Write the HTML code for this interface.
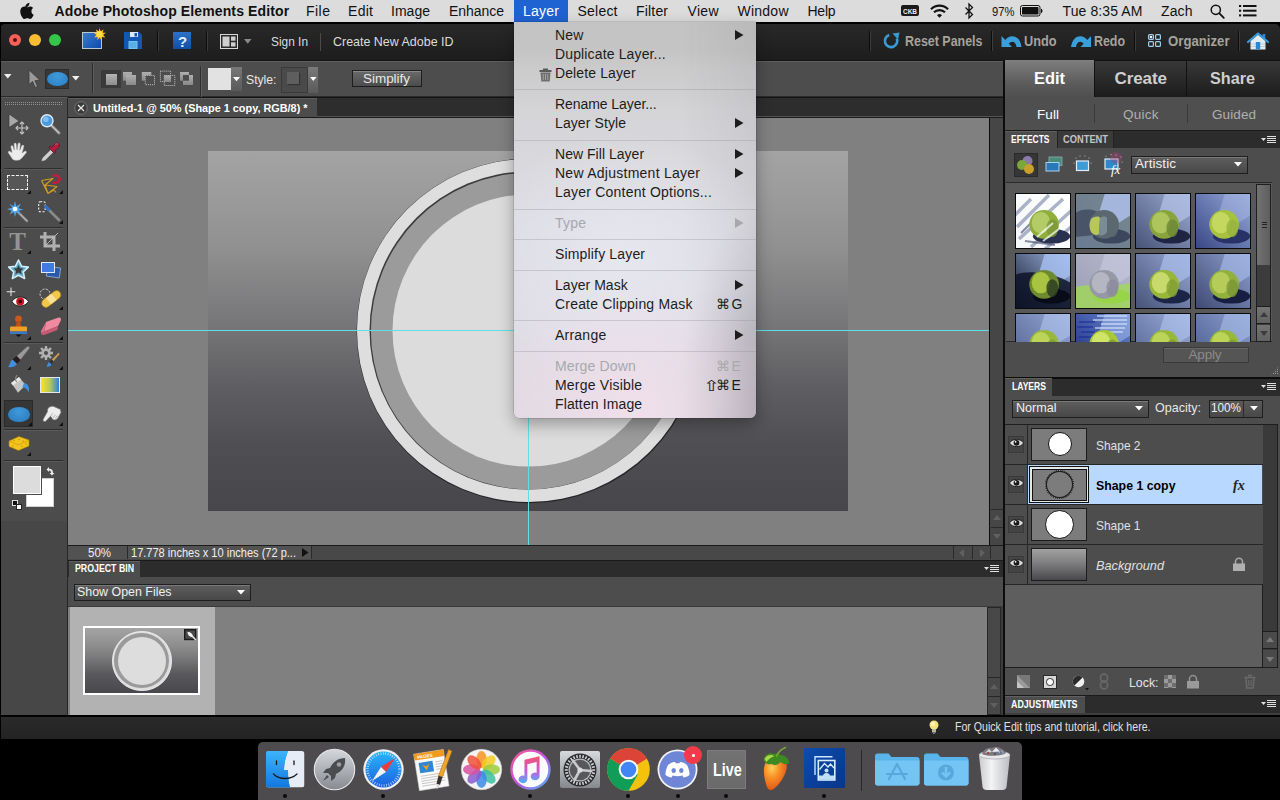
<!DOCTYPE html>
<html>
<head>
<meta charset="utf-8">
<title>Adobe Photoshop Elements Editor</title>
<style>
html,body{margin:0;padding:0;}
body{width:1280px;height:800px;overflow:hidden;background:#000;font-family:"Liberation Sans",sans-serif;position:relative;}
.abs,.abs *{position:absolute;}
.abs{left:0;top:0;width:1280px;height:800px;overflow:hidden;}
div{box-sizing:border-box;}
svg{overflow:visible;}
.t{white-space:nowrap;line-height:1;}
.b{position:absolute;}

</style>
</head>
<body>
<div class="abs">
<!-- sec_chrome -->
<div style="left:0px;top:0px;width:1280px;height:22px;background:#dcdcdc;"></div>
<svg style="left:20px;top:2px" width="15" height="18" viewBox="0 0 15 18"><path d="M10.6 4.3c.7-.9 1.1-2 1-3.1-1 .1-2.200.700-2.900 1.500-.6.7-1.200 1.900-1 3 1.100.1 2.200-.5 2.900-1.400zM13.600 9.600c0-2.100 1.700-3.100 1.800-3.200-1-1.400-2.500-1.600-3-1.600-1.300-.1-2.500.8-3.100.8-.7 0-1.600-.7-2.700-.7C5.200 4.900 3.900 5.700 3.200 7c-1.500 2.500-.4 6.300 1 8.300.7 1 1.500 2.100 2.600 2.100 1.100 0 1.500-.7 2.700-.7 1.300 0 1.600.7 2.700.7 1.100 0 1.800-1 2.500-2 .8-1.200 1.100-2.300 1.100-2.300s-2.200-.9-2.200-3.500z" fill="#111" transform="translate(-2.200,-0.400)"/></svg>
<div class="t" style="left:54.5px;top:3.8px;font-size:14px;color:#111;font-weight:700;letter-spacing:0.12px;">Adobe Photoshop Elements Editor</div>
<div class="t" style="left:306.0px;top:3.8px;font-size:14px;color:#111;letter-spacing:0.48px;">File</div>
<div class="t" style="left:348.0px;top:3.8px;font-size:14px;color:#111;letter-spacing:0.29px;">Edit</div>
<div class="t" style="left:391.0px;top:3.8px;font-size:14px;color:#111;letter-spacing:0.02px;">Image</div>
<div class="t" style="left:449.0px;top:3.8px;font-size:14px;color:#111;letter-spacing:-0.04px;">Enhance</div>
<div class="t" style="left:577.5px;top:3.8px;font-size:14px;color:#111;letter-spacing:0.22px;">Select</div>
<div class="t" style="left:636.0px;top:3.8px;font-size:14px;color:#111;letter-spacing:0.18px;">Filter</div>
<div class="t" style="left:687.5px;top:3.8px;font-size:14px;color:#111;letter-spacing:0.30px;">View</div>
<div class="t" style="left:737.5px;top:3.8px;font-size:14px;color:#111;letter-spacing:0.24px;">Window</div>
<div class="t" style="left:807.5px;top:3.8px;font-size:14px;color:#111;letter-spacing:-0.26px;">Help</div>
<div style="left:514px;top:0px;width:54px;height:22px;background:#1f62d2;"></div>
<div class="t" style="left:523.0px;top:3.8px;font-size:14px;color:#fff;letter-spacing:0.24px;">Layer</div>
<div style="left:901px;top:5px;width:18px;height:11px;background:#1a1a1a;border-radius:2px;"></div>
<div class="t" style="left:903.0px;top:7.7px;font-size:7px;color:#eee;font-weight:700;transform:scaleX(0.9231);transform-origin:0 0;">CKB</div>
<svg style="left:930px;top:4px" width="19" height="14" viewBox="0 0 19 14"><path d="M1 5.200a12 12 0 0 1 17 0" fill="none" stroke="#111" stroke-width="2.200"/><path d="M4 8.300a7.800 7.800 0 0 1 11 0" fill="none" stroke="#111" stroke-width="2.200"/><path d="M7 11.200a3.600 3.600 0 0 1 5 0L9.500 13.800z" fill="#111"/></svg>
<svg style="left:964px;top:3px" width="11" height="16" viewBox="0 0 11 16"><path d="M1.500 4.500L8.500 11.500 5 15V1l3.500 3.500L1.500 11.500" fill="none" stroke="#111" stroke-width="1.300"/></svg>
<div class="t" style="left:991.5px;top:4.5px;font-size:13px;color:#111;transform:scaleX(0.8647);transform-origin:0 0;">97%</div>
<svg style="left:1020px;top:5px" width="23" height="12" viewBox="0 0 23 12"><rect x=".5" y=".5" width="19.500" height="10.500" rx="2" fill="none" stroke="#111" stroke-width="1"/><rect x="2" y="2" width="16.500" height="7.500" rx=".8" fill="#111"/><path d="M21 3.800v4.400c.9-.3 1.500-1.200 1.500-2.200s-.6-1.900-1.500-2.200z" fill="#111"/></svg>
<div class="t" style="left:1062.5px;top:3.8px;font-size:14px;color:#111;letter-spacing:0.11px;">Tue 8:35 AM</div>
<div class="t" style="left:1161.0px;top:3.8px;font-size:14px;color:#111;letter-spacing:0.13px;">Zach</div>
<svg style="left:1210px;top:4px" width="15" height="15" viewBox="0 0 15 15"><circle cx="5.800" cy="5.800" r="4.600" fill="none" stroke="#111" stroke-width="1.500"/><path d="M9.200 9.200L13.800 13.800" stroke="#111" stroke-width="1.800" stroke-linecap="round"/></svg>
<svg style="left:1239px;top:5px" width="18" height="12" viewBox="0 0 18 12"><g fill="#111"><rect x="0" y="0" width="2.200" height="2"/><rect x="4" y="0" width="13.500" height="2"/><rect x="0" y="4.700" width="2.200" height="2"/><rect x="4" y="4.700" width="13.500" height="2"/><rect x="0" y="9.400" width="2.200" height="2"/><rect x="4" y="9.400" width="13.500" height="2"/></g></svg>
<div style="left:0px;top:22px;width:1280px;height:38px;background:#000;"></div>
<div style="left:0px;top:23.5px;width:1280px;height:36.5px;background:linear-gradient(#292929,#242424 40%,#1d1d1d);border-radius:5px 5px 0 0;"></div>
<div style="left:9px;top:34px;width:12px;height:12px;border-radius:50%;background:#f4605a;"></div>
<div style="left:13px;top:38px;width:4px;height:4px;border-radius:50%;background:#5a0f0c;"></div>
<div style="left:29px;top:34px;width:12px;height:12px;border-radius:50%;background:#f9bd33;"></div>
<div style="left:49px;top:34px;width:12px;height:12px;border-radius:50%;background:#33c748;"></div>
<div style="left:82px;top:32px;width:20px;height:17px;background:linear-gradient(135deg,#3a7bd0,#0d4ba8);border:1px solid #b9c6d6;"></div>
<svg style="left:93px;top:28px" width="13" height="13" viewBox="0 0 13 13"><path d="M6.500 0l1.200 3.300 2.900-1.900-1 3.300 3.400.1-2.800 2 2.100 2.700-3.300-.6L8.500 12.300 6.500 9.500 4.500 12.300 4.500 8.900l-3.300.6 2.100-2.700-2.800-2 3.400-.1-1-3.300 2.900 1.900z" fill="#ffc21a"/><circle cx="6.500" cy="6.300" r="3" fill="#ffdf4a"/></svg>
<svg style="left:124px;top:32px" width="18" height="17" viewBox="0 0 18 17"><path d="M0 0h15l3 3v14H0z" fill="#1556b3"/><rect x="6" y="0" width="8" height="5" fill="#dfe7f2"/><rect x="10.500" y="1" width="2.500" height="3.500" fill="#1556b3"/><rect x="4.500" y="9" width="9" height="8" fill="#6fc3f2"/><path d="M5.500 11h7M5.500 13h7M5.500 15h7" stroke="#3b8fd0" stroke-width=".8"/></svg>
<div style="left:156.5px;top:31px;width:1px;height:20px;background:#0c0c0c;"></div>
<div style="left:157.5px;top:31px;width:1px;height:20px;background:#3c3c3c;"></div>
<div style="left:205.5px;top:31px;width:1px;height:20px;background:#0c0c0c;"></div>
<div style="left:206.5px;top:31px;width:1px;height:20px;background:#3c3c3c;"></div>
<div style="left:173px;top:32px;width:18px;height:17px;background:linear-gradient(#2a72cc,#0f4fa6);"></div>
<div class="t" style="left:178.0px;top:33.8px;font-size:15px;color:#dff0ff;font-weight:700;">?</div>
<svg style="left:220px;top:34px" width="18" height="15" viewBox="0 0 18 15"><rect x=".5" y=".5" width="17" height="14" fill="#2a2a2a" stroke="#d8d8d8" stroke-width="1"/><rect x="2.500" y="2.500" width="7" height="10" fill="#cfcfcf"/><rect x="11" y="2.500" width="4.500" height="4.200" fill="#cfcfcf"/><rect x="11" y="8.300" width="4.500" height="4.200" fill="#cfcfcf"/></svg>
<svg style="left:244px;top:39px" width="8" height="5" viewBox="0 0 8 5"><path d="M0 0h7.500L3.750 4.800z" fill="#8a8a8a"/></svg>
<div class="t" style="left:271.0px;top:34.6px;font-size:13.5px;color:#dcdcdc;transform:scaleX(0.8803);transform-origin:0 0;">Sign In</div>
<div style="left:320px;top:33px;width:1px;height:18px;background:#4a4a4a;"></div>
<div class="t" style="left:332.5px;top:34.6px;font-size:13.5px;color:#dcdcdc;transform:scaleX(0.9229);transform-origin:0 0;">Create New Adobe ID</div>
<div style="left:868.5px;top:31px;width:1px;height:20px;background:#0c0c0c;"></div>
<div style="left:869.5px;top:31px;width:1px;height:20px;background:#3c3c3c;"></div>
<div style="left:991px;top:31px;width:1px;height:20px;background:#0c0c0c;"></div>
<div style="left:992px;top:31px;width:1px;height:20px;background:#3c3c3c;"></div>
<div style="left:1133.5px;top:31px;width:1px;height:20px;background:#0c0c0c;"></div>
<div style="left:1134.5px;top:31px;width:1px;height:20px;background:#3c3c3c;"></div>
<div style="left:1238px;top:31px;width:1px;height:20px;background:#0c0c0c;"></div>
<div style="left:1239px;top:31px;width:1px;height:20px;background:#3c3c3c;"></div>
<svg style="left:883px;top:32px" width="17" height="17" viewBox="0 0 17 17"><path d="M6.200 3A6.200 6.200 0 1 0 13.800 6.500" fill="none" stroke="#3a9ad4" stroke-width="2.600"/><path d="M9.500 1.500l7-1-1.500 7z" fill="#3a9ad4"/></svg>
<div class="t" style="left:905.0px;top:34.1px;font-size:14px;color:#a6a29c;font-weight:700;transform:scaleX(0.8892);transform-origin:0 0;">Reset Panels</div>
<svg style="left:1001px;top:35px" width="20" height="12" viewBox="0 0 20 12"><path d="M.5 1v11h10.500z" fill="#3aa0dc"/><path d="M4 5.500C7 -.5 18.500 -2 20.500 12h-5C15 7 11 5 7.500 9z" fill="#3aa0dc"/></svg>
<div class="t" style="left:1024.0px;top:34.1px;font-size:14px;color:#a6a29c;font-weight:700;transform:scaleX(0.9087);transform-origin:0 0;">Undo</div>
<svg style="left:1071px;top:35px" width="20" height="12" viewBox="0 0 20 12"><g transform="translate(20.500,0) scale(-1,1)"><path d="M.5 1v11h10.500z" fill="#3aa0dc"/><path d="M4 5.500C7 -.5 18.500 -2 20.500 12h-5C15 7 11 5 7.500 9z" fill="#3aa0dc"/></g></svg>
<div class="t" style="left:1094.0px;top:34.1px;font-size:14px;color:#a6a29c;font-weight:700;transform:scaleX(0.8857);transform-origin:0 0;">Redo</div>
<svg style="left:1148px;top:34px" width="13" height="13" viewBox="0 0 13 13"><g fill="none" stroke="#9ad0f0" stroke-width="1.200"><rect x=".6" y=".6" width="4.800" height="4.800" rx="1"/><rect x="7.600" y=".6" width="4.800" height="4.800" rx="1"/><rect x=".6" y="7.600" width="4.800" height="4.800" rx="1"/><rect x="7.600" y="7.600" width="4.800" height="4.800" rx="1"/></g><circle cx="3" cy="3" r="1.300" fill="#fff"/></svg>
<div class="t" style="left:1167.5px;top:34.1px;font-size:14px;color:#a6a29c;font-weight:700;transform:scaleX(0.9411);transform-origin:0 0;">Organizer</div>
<svg style="left:1247px;top:32px" width="22" height="18" viewBox="0 0 22 18"><rect x="15.500" y="2" width="2.800" height="5" fill="#2b88d0"/><path d="M3.500 9L11 2.800l7.500 6.200V17.500h-15z" fill="#e4ecf2"/><path d="M4 12h14M4 14.500h14" stroke="#b8c4cc" stroke-width=".8"/><path d="M1 10L11 1.500 21 10" fill="none" stroke="#3a9ad8" stroke-width="2.200" stroke-linejoin="round" stroke-linecap="round"/><rect x="8.800" y="10" width="4.400" height="7.500" fill="#2b88d0"/></svg>
<div style="left:1004px;top:60px;width:276px;height:37px;background:linear-gradient(#383838,#1c1c1c);border-top:1px solid #111;"></div>
<div style="left:1004px;top:60px;width:90px;height:37.5px;background:linear-gradient(#7e7e7e,#5c5c5c 60%,#4e4e4e);"></div>
<div style="left:1094px;top:61px;width:1px;height:36px;background:#111;"></div>
<div style="left:1186px;top:61px;width:1px;height:36px;background:#111;"></div>
<div class="t" style="left:1033.5px;top:70.1px;font-size:17px;color:#fff;font-weight:700;transform:scaleX(0.9655);transform-origin:0 0;">Edit</div>
<div class="t" style="left:1114.5px;top:70.1px;font-size:17px;color:#cfcfcf;font-weight:700;letter-spacing:-0.08px;">Create</div>
<div class="t" style="left:1210.0px;top:70.1px;font-size:17px;color:#cfcfcf;font-weight:700;transform:scaleX(0.9524);transform-origin:0 0;">Share</div>
<div style="left:1004px;top:97px;width:276px;height:33.5px;background:#4f4f4f;"></div>
<div style="left:1094px;top:104px;width:1px;height:19px;background:#3a3a3a;"></div>
<div style="left:1187px;top:104px;width:1px;height:19px;background:#3a3a3a;"></div>
<div class="t" style="left:1037.0px;top:107.6px;font-size:13.5px;color:#fff;letter-spacing:0.08px;">Full</div>
<div class="t" style="left:1123.0px;top:107.6px;font-size:13.5px;color:#b0b0b0;letter-spacing:0.25px;">Quick</div>
<div class="t" style="left:1212.0px;top:107.6px;font-size:13.5px;color:#b0b0b0;letter-spacing:0.09px;">Guided</div>
<div style="left:0px;top:714.5px;width:1280px;height:25.5px;background:#000;"></div>
<div style="left:0px;top:717px;width:1280px;height:22px;background:linear-gradient(#2a2a2a,#232323);"></div>
<svg style="left:929px;top:720px" width="10" height="15" viewBox="0 0 10 15"><circle cx="5" cy="5" r="4.500" fill="#f6e27a"/><circle cx="4" cy="4" r="2" fill="#fff6c0"/><rect x="3" y="9" width="4" height="3.500" fill="#b8b8a0"/><rect x="4" y="12.500" width="2" height="1.500" fill="#777"/></svg>
<div class="t" style="left:955.0px;top:721.3px;font-size:12px;color:#e0e0e0;transform:scaleX(0.8829);transform-origin:0 0;">For Quick Edit tips and tutorial, click here.</div>
<!-- sec_opt -->
<div style="left:0px;top:60px;width:1004px;height:37px;background:#4d4d4d;border-top:1px solid #141414;border-bottom:1px solid #2a2a2a;"></div>
<div style="left:0px;top:61px;width:1004px;height:1px;background:#5e5e5e;"></div>
<svg style="left:4px;top:74px" width="8" height="5" viewBox="0 0 8 5"><path d="M0 0h7.500L3.750 4.500z" fill="#f0f0f0"/></svg>
<svg style="left:28px;top:70px" width="13" height="19" viewBox="0 0 13 19"><path d="M1 0v14.500l3.600-3 2.600 6 2.400-1-2.600-5.800L11.800 10z" fill="#9a9a9a" stroke="#3a3a3a" stroke-width=".8"/></svg>
<div style="left:45px;top:69px;width:24px;height:20px;background:#383838;border:1px solid #2c2c2c;"></div>
<div style="left:47px;top:72px;width:20.5px;height:14px;background:radial-gradient(ellipse at 50% 30%,#3f9ada,#2a7fc4);border-radius:50%;"></div>
<svg style="left:72px;top:76px" width="8" height="5" viewBox="0 0 8 5"><path d="M0 0h7.500L3.750 4.500z" fill="#f0f0f0"/></svg>
<div style="left:92px;top:63px;width:1px;height:30px;background:#2e2e2e;"></div>
<div style="left:93px;top:63px;width:1px;height:30px;background:#5c5c5c;"></div>
<div style="left:101px;top:70px;width:20px;height:18px;background:#3a3a3a;"></div>
<div style="left:106px;top:74px;width:10.5px;height:10.5px;background:linear-gradient(#b4b4b4,#8c8c8c);"></div>
<svg style="left:122px;top:69px" width="74" height="18" viewBox="0 0 74 18"><defs><linearGradient id="og" x1="0" y1="0" x2="0" y2="1"><stop offset="0" stop-color="#b0b0b0"/><stop offset="1" stop-color="#888"/></linearGradient></defs><rect x="1" y="3" width="9" height="8.700" fill="url(#og)"/><rect x="4" y="6" width="10" height="10" fill="url(#og)"/><path d="M19.800 3h9.500v3.200h-6.300v5.500h-3.200z" fill="url(#og)"/><rect x="23.300" y="6.500" width="9.200" height="9.200" fill="none" stroke="#c4c4c4" stroke-width="1" stroke-dasharray="1 1"/><rect x="38.400" y="2.100" width="10.200" height="10.400" fill="none" stroke="#c4c4c4" stroke-width="1" stroke-dasharray="1 1"/><rect x="42.200" y="6.500" width="10.600" height="10" fill="none" stroke="#c4c4c4" stroke-width="1" stroke-dasharray="1 1"/><rect x="42.200" y="6.300" width="6.800" height="6.500" fill="url(#og)"/><path d="M58 3h9v3h-6v5.700h-3z" fill="url(#og)"/><path d="M67 6h4v10h-10v-4.300h6z" fill="url(#og)"/></svg>
<div style="left:200px;top:66px;width:1px;height:31px;background:#2e2e2e;"></div>
<div style="left:201px;top:66px;width:1px;height:31px;background:#5c5c5c;"></div>
<div style="left:208px;top:68px;width:23px;height:22px;background:#e2e2e2;"></div>
<div style="left:231px;top:67px;width:11px;height:24px;background:linear-gradient(#787878,#5a5a5a);"></div>
<svg style="left:233px;top:77px" width="8" height="5" viewBox="0 0 8 5"><path d="M0 0h7L3.500 4.200z" fill="#fff"/></svg>
<div class="t" style="left:245.5px;top:72.6px;font-size:13.5px;color:#e6e6e6;transform:scaleX(0.9033);transform-origin:0 0;">Style:</div>
<div style="left:281px;top:66.5px;width:27px;height:26px;background:#4a4a4a;border:1px solid #3a3a3a;"></div>
<div style="left:287px;top:72px;width:12px;height:12px;background:#5e5e5e;box-shadow:1px 1px 1px #333;"></div>
<div style="left:307.5px;top:66.5px;width:10px;height:26px;background:linear-gradient(#7a7a7a,#5a5a5a);"></div>
<svg style="left:309.5px;top:77px" width="7" height="5" viewBox="0 0 7 5"><path d="M0 0h6.500L3.250 4z" fill="#fff"/></svg>
<div style="left:352px;top:70px;width:70px;height:17px;background:linear-gradient(#6a6a6a,#4c4c4c);border:1px solid #1e1e1e;box-shadow:inset 0 1px 0 #888;"></div>
<div class="t" style="left:363.0px;top:71.6px;font-size:13.5px;color:#e8e8e8;letter-spacing:-0.04px;">Simplify</div>
<!-- sec_tools -->
<div style="left:0px;top:97px;width:68px;height:618px;background:#4c4c4c;border-right:1px solid #262626;border-top:1px solid #5a5a5a;"></div>
<div style="left:0px;top:24px;width:1px;height:716px;background:#000;"></div>
<div style="left:1px;top:521px;width:66px;height:194px;background:#474747;"></div>
<div style="left:5px;top:102px;width:57px;height:1px;background-image:linear-gradient(90deg,#909090 1px,transparent 1px);background-size:2px 1px;"></div>
<div style="left:5px;top:104px;width:57px;height:1px;background-image:linear-gradient(90deg,#909090 1px,transparent 1px);background-size:2px 1px;"></div>
<div style="left:4px;top:168px;width:59px;height:1px;background:#2e2e2e;"></div>
<div style="left:4px;top:169px;width:59px;height:1px;background:#5a5a5a;"></div>
<div style="left:4px;top:227px;width:59px;height:1px;background:#2e2e2e;"></div>
<div style="left:4px;top:228px;width:59px;height:1px;background:#5a5a5a;"></div>
<div style="left:4px;top:342px;width:59px;height:1px;background:#2e2e2e;"></div>
<div style="left:4px;top:343px;width:59px;height:1px;background:#5a5a5a;"></div>
<div style="left:4px;top:429px;width:59px;height:1px;background:#2e2e2e;"></div>
<div style="left:4px;top:430px;width:59px;height:1px;background:#5a5a5a;"></div>
<div style="left:4px;top:460px;width:59px;height:1px;background:#2e2e2e;"></div>
<div style="left:4px;top:461px;width:59px;height:1px;background:#5a5a5a;"></div>
<svg style="left:8px;top:114px" width="22" height="21" viewBox="0 0 22 21"><path d="M1 0v13.500l10-6.500z" fill="#a8a8a8" stroke="#333" stroke-width=".6"/><g stroke="#c8c8c8" stroke-width="1.100" fill="none"><path d="M14 8v12M8 14h12"/><path d="M12 10l2-2 2 2M12 18l2 2 2-2M10 12l-2 2 2 2M18 12l2 2-2 2"/></g></svg>
<svg style="left:40px;top:114px" width="21" height="21" viewBox="0 0 21 21"><path d="M11.500 11.500l7.500 7.500" stroke="#7a7a7a" stroke-width="3.200" stroke-linecap="round"/><path d="M11.500 11.500l7.500 7.500" stroke="#d0d0d0" stroke-width="1.200" stroke-linecap="round"/><circle cx="7" cy="6.800" r="6" fill="#4a9ae0" stroke="#e0eaf2" stroke-width="1.400"/><circle cx="5.800" cy="5.200" r="2.800" fill="#8cc4f4" opacity=".85"/></svg>
<svg style="left:7px;top:142px" width="21" height="19" viewBox="0 0 21 19"><path d="M5 10.500L3.800 5c-.4-1.700 1.800-2.200 2.300-.6L7.300 8 7 2.300C6.900.6 9.200.5 9.400 2.200L10 7.800l.9-5.900c.3-1.700 2.500-1.400 2.400.3L12.800 8.200l1.900-4.400c.7-1.500 2.700-.7 2.200.9L15.200 11l2.300-1.800c1.400-1 2.800.6 1.700 1.800L15 16c-1.500 1.700-3 2.500-5.500 2.500-3 0-4.500-1.300-5.300-3.300L1.200 10.800C.5 9.200 2.500 8.200 3.500 9.600z" fill="#ececec" stroke="#8a8a8a" stroke-width=".5"/></svg>
<svg style="left:40px;top:141px" width="21" height="22" viewBox="0 0 21 22"><path d="M1 20.500l1.200-3.500 8.500-8.500 2.800 2.800-8.500 8.500z" fill="#d0d0d0" stroke="#4a4a4a" stroke-width=".7"/><path d="M8.500 6.500l6 6 1.500-1.500-1-1.200 3.800-3.600c2.200-2.200-1.400-5.800-3.600-3.600L11.600 6.400 10.400 5.200z" fill="#b01e3e" stroke="#5a0d1e" stroke-width=".6"/><path d="M15 3.500c1-1 2.500-.8 3 0" fill="none" stroke="#e06a84" stroke-width=".9"/></svg>
<div style="left:7px;top:175px;width:21px;height:15px;border:1.500px dashed #f2f2f2;background:#565656;"></div>
<svg style="left:27px;top:190px" width="4" height="4" viewBox="0 0 4 4"><path d="M4 0v4H0z" fill="#111"/></svg>
<svg style="left:40px;top:173px" width="21" height="21" viewBox="0 0 21 21"><path d="M1.500 7.500L13 5.500 5 12l3 8.500 6-3.500 2 2.500M5 12l12 1.500-9 7M1.500 7.500L8 20.500" fill="none" stroke="#d09a1e" stroke-width="1.200" stroke-linejoin="round"/><path d="M12.500 2.500h3.500a3.600 3.600 0 0 1 0 7.200h-3.500" fill="none" stroke="#c01e40" stroke-width="2.600"/></svg>
<svg style="left:59px;top:190px" width="4" height="4" viewBox="0 0 4 4"><path d="M4 0v4H0z" fill="#111"/></svg>
<svg style="left:7px;top:201px" width="22" height="21" viewBox="0 0 22 21"><path d="M8 8l12 12" stroke="#8a8a8a" stroke-width="2.600" stroke-linecap="round"/><path d="M8 8l12 12" stroke="#d0d0d0" stroke-width=".8"/><path d="M8 0l1.300 5.200 4.700-2.700-2.700 4.700 5.200 1.300-5.200 1.300 2.200 3.700-4.200-2.200L8 16 6.700 11.300 2.500 13.500l2.200-3.700L0 8l5.200-1.300L2.500 2.500l4.200 2.700z" fill="#4da6f0"/><circle cx="8" cy="8" r="2.300" fill="#fff"/></svg>
<svg style="left:38px;top:201px" width="23" height="21" viewBox="0 0 23 21"><rect x=".7" y=".7" width="6.500" height="10" rx="1.500" fill="none" stroke="#f0f0f0" stroke-width="1.100" stroke-dasharray="2 1.500"/><path d="M8 6l13 13" stroke="#8a8a8a" stroke-width="2.800" stroke-linecap="round"/><path d="M7.500 5.500l3 3" stroke="#2f6fd0" stroke-width="3" stroke-linecap="round"/></svg>
<svg style="left:59px;top:220px" width="4" height="4" viewBox="0 0 4 4"><path d="M4 0v4H0z" fill="#111"/></svg>
<div class="t" style="left:9.3px;top:228.5px;font-size:25px;color:#939393;font-weight:700;font-family:&quot;Liberation Serif&quot;,serif;">T</div>
<svg style="left:27px;top:250px" width="4" height="4" viewBox="0 0 4 4"><path d="M4 0v4H0z" fill="#111"/></svg>
<svg style="left:40px;top:232px" width="21" height="20" viewBox="0 0 21 20"><g fill="none" stroke="#b0b0b0" stroke-width="3"><path d="M5 0v14h15"/><path d="M0 5h14v14"/></g><path d="M5.500 13.500L18 1" stroke="#c8c8c8" stroke-width=".8"/></svg>
<svg style="left:59px;top:250px" width="4" height="4" viewBox="0 0 4 4"><path d="M4 0v4H0z" fill="#111"/></svg>
<svg style="left:8px;top:259px" width="22" height="21" viewBox="0 0 22 21"><path d="M10.500 1l3 6.200 6.800.9-5 4.700 1.300 6.700-6.100-3.300-6.100 3.300 1.300-6.700-5-4.700 6.800-.9z" fill="#5fa8c8" stroke="#d0ecf8" stroke-width="1.600" stroke-linejoin="round"/><path d="M10.500 6l1.500 3.200 3.400.4-2.500 2.300.7 3.400-3.100-1.700-3.100 1.700.7-3.400-2.500-2.300 3.400-.4z" fill="#3a3a3a"/></svg>
<svg style="left:41px;top:262px" width="20" height="17" viewBox="0 0 20 17"><rect x="6" y="5" width="13" height="10" fill="#2c58a8" stroke="#8fb0e0" stroke-width=".8" transform="rotate(8 12 10)"/><rect x=".5" y=".5" width="13" height="10" fill="#3f7be0" stroke="#dfe8f8" stroke-width="1"/></svg>
<svg style="left:6px;top:286px" width="23" height="22" viewBox="0 0 23 22"><path d="M5 1.500v8.500M.75 5.750h8.500" stroke="#e8e8e8" stroke-width="1"/><path d="M6 15.500c3-6 13-6 16.500 0-3.500 6-13.500 6-16.500 0z" fill="#fff" stroke="#1a1a1a" stroke-width="1"/><circle cx="14.200" cy="15.500" r="4" fill="#c8141e"/><circle cx="14.200" cy="15.500" r="1.800" fill="#3a0508"/></svg>
<svg style="left:39px;top:287px" width="23" height="21" viewBox="0 0 23 21"><circle cx="6" cy="7" r="5" fill="none" stroke="#e8e8e8" stroke-width=".9" stroke-dasharray="2 1.400"/><g transform="rotate(-38 12.500 11.500)"><rect x="1" y="7.500" width="22" height="8.500" rx="4.200" fill="#f2c84a" stroke="#a07a18" stroke-width=".6"/><rect x="8.500" y="7.800" width="7" height="7.900" fill="#f8e29a"/></g></svg>
<svg style="left:59px;top:306px" width="4" height="4" viewBox="0 0 4 4"><path d="M4 0v4H0z" fill="#111"/></svg>
<svg style="left:9px;top:315px" width="19" height="22" viewBox="0 0 19 22"><circle cx="9.500" cy="4" r="3.400" fill="#c8581e"/><path d="M8 6h3l1.500 6h-6z" fill="#b8501a"/><rect x="1" y="11.500" width="17" height="5" rx="1" fill="#f0a024"/><rect x="1" y="16.500" width="17" height="2.500" fill="#3a78c8"/><path d="M6.500 19.500h6l-3 2.500z" fill="#111"/></svg>
<svg style="left:27px;top:336px" width="4" height="4" viewBox="0 0 4 4"><path d="M4 0v4H0z" fill="#111"/></svg>
<svg style="left:40px;top:317px" width="22" height="19" viewBox="0 0 22 19"><path d="M6 5L18.500 0.500c1.500-.5 3 1 2.500 2.500L18 9 4.500 14.500z" fill="#f08aa0"/><path d="M4.500 14.500L18 9l-.5 4L4 18c-2 .5-3.500-1-3-3z" fill="#c85a74"/><path d="M6 5l-5 9c-.5 1 .5 1.500 3.500.5z" fill="#e0708c"/></svg>
<svg style="left:59px;top:336px" width="4" height="4" viewBox="0 0 4 4"><path d="M4 0v4H0z" fill="#111"/></svg>
<svg style="left:8px;top:346px" width="22" height="22" viewBox="0 0 22 22"><path d="M21.500 2.500L12.500 14 8.500 10 19 .5c1.500-1 3.500.5 2.500 2z" fill="#9a9a9a" stroke="#4a4a4a" stroke-width=".6"/><path d="M8.500 10l4 4-3.500 4-4.500-4.500z" fill="#2a1c1c"/><path d="M4.500 13.500l4.500 4.500c-2 3-5.500 3.500-9 3 2-1.500 1.500-5 4.500-7.500z" fill="#3f8fe0"/></svg>
<svg style="left:27px;top:366px" width="4" height="4" viewBox="0 0 4 4"><path d="M4 0v4H0z" fill="#111"/></svg>
<svg style="left:38px;top:345px" width="24" height="23" viewBox="0 0 24 23"><g fill="#b0b0b0"><circle cx="8" cy="8" r="4.800"/><g stroke="#b0b0b0" stroke-width="2.400"><path d="M8 1v14M1 8h14M3 3l10 10M13 3L3 13"/></g></g><circle cx="8" cy="8" r="2" fill="#4c4c4c"/><path d="M22 9l-6.500 7.500-2-2L20.500 7.500z" fill="#c89a5a" stroke="#444" stroke-width=".5"/><path d="M13.500 14.500l2 2-2 3-2.500-2.500z" fill="#333"/><path d="M11 17l2.500 2.500c-1 2-3 2.500-5 2 1-1 1-3 2.500-4.500z" fill="#3f8fe0"/></svg>
<svg style="left:59px;top:366px" width="4" height="4" viewBox="0 0 4 4"><path d="M4 0v4H0z" fill="#111"/></svg>
<svg style="left:8px;top:375px" width="22" height="20" viewBox="0 0 22 20"><path d="M3 8l8-6 7 8-8 8z" fill="#c4c4c4" stroke="#555" stroke-width=".6"/><path d="M3 8l8-6 2 2.500-8 6z" fill="#e8e8e8"/><path d="M9 0c-2 3-2 6 0 7" fill="none" stroke="#888" stroke-width="1.200"/><path d="M16 8c4 .5 6 4 4.500 9.500-1-3-3-5-6-5.500z" fill="#3f8fe0"/></svg>
<div style="left:40px;top:377px;width:20px;height:16px;background:linear-gradient(90deg,#f8e61e,#b4c85a 50%,#2f7fe0);border:1px solid #e8e8e8;"></div>
<div style="left:4px;top:400px;width:29px;height:27px;background:#363636;border:1px solid #2a2a2a;"></div>
<div style="left:8px;top:407px;width:21.5px;height:14.5px;border-radius:50%;background:radial-gradient(ellipse at 50% 30%,#3f9ada,#2878bc);"></div>
<svg style="left:28px;top:422px" width="4" height="4" viewBox="0 0 4 4"><path d="M4 0v4H0z" fill="#111"/></svg>
<svg style="left:41px;top:405px" width="21" height="20" viewBox="0 0 21 20"><path d="M19.500 4.500L13 1.500C9 .5 6 3 6.500 6.500L2.300 14c-1 2 1.200 3.500 2.700 2l4.500-4.800 1.500 2.200c1.800 2.400 5 1.600 6-.4L20 7.500z" fill="#ececec" stroke="#6e6e6e" stroke-width=".7" stroke-linejoin="round"/><path d="M9.500 11.200l2.500-3M12 13l2.500-3.200M14.500 13.500l2-2.800" stroke="#9a9a9a" stroke-width=".7" fill="none"/></svg>
<svg style="left:59px;top:422px" width="4" height="4" viewBox="0 0 4 4"><path d="M4 0v4H0z" fill="#111"/></svg>
<svg style="left:8px;top:436px" width="22" height="15" viewBox="0 0 22 15"><path d="M1 5l10-4.500 10 3.500v6L10.500 14.500 1 10.500z" fill="#f2c41e" stroke="#a8820a" stroke-width=".6"/><path d="M1 5l9.500 4L21 4" fill="none" stroke="#c89a0a" stroke-width=".7"/><g fill="#c89a0a"><circle cx="6" cy="4.500" r=".8"/><circle cx="11" cy="3.500" r=".8"/><circle cx="15" cy="5" r=".8"/><circle cx="5" cy="10" r=".8"/><circle cx="14" cy="10.500" r=".8"/><circle cx="18" cy="8" r=".8"/></g></svg>
<svg style="left:27px;top:452px" width="4" height="4" viewBox="0 0 4 4"><path d="M4 0v4H0z" fill="#111"/></svg>
<div style="left:25.5px;top:478px;width:28px;height:28.5px;background:#fff;border:1px solid #d0d0d0;"></div>
<div style="left:13px;top:466px;width:28px;height:28px;background:#dcdcdc;border:1px solid #fff;box-shadow:0 0 0 1px #4c4c4c;"></div>
<svg style="left:45px;top:466px" width="10" height="10" viewBox="0 0 10 10"><path d="M1.500 3.500L4 1v1.800c3 0 4 1.500 4 4.200h1.500L7 9.500 4.500 7H6c0-1.500-.5-2.400-2-2.400V6z" fill="#e8e8e8"/></svg>
<div style="left:12px;top:500px;width:6px;height:6px;background:#111;border:1px solid #ddd;"></div>
<div style="left:15.5px;top:503.5px;width:6px;height:6px;background:#fff;border:1px solid #222;"></div>
<!-- sec_doc -->
<div style="left:68px;top:97px;width:936px;height:21px;background:#2d2d2d;border-top:1px solid #141414;"></div>
<div style="left:68px;top:116px;width:936px;height:1px;background:#545454;"></div>
<div style="left:68px;top:117px;width:936px;height:1px;background:#1a1a1a;"></div>
<div style="left:68px;top:98px;width:248.5px;height:19px;background:#4c4c4c;border-top:1px solid #5c5c5c;"></div>
<svg style="left:73.5px;top:100.5px" width="14" height="14" viewBox="0 0 14 14"><circle cx="7" cy="7" r="6.300" fill="#3c3c3c" stroke="#767676" stroke-width=".9"/><path d="M4 4l6 6M10 4l-6 6" stroke="#e8e8e8" stroke-width="1.200"/></svg>
<div class="t" style="left:92.5px;top:102.6px;font-size:11.5px;color:#fff;font-weight:700;transform:scaleX(0.9450);transform-origin:0 0;">Untitled-1 @ 50% (Shape 1 copy, RGB/8) *</div>
<div style="left:68px;top:118px;width:921px;height:427px;background:#808080;"></div>
<div style="left:208px;top:151px;width:640px;height:360px;background:linear-gradient(#a3a3a3 0%,#9d9d9d 10%,#909091 27%,#747476 50%,#5f5f63 65%,#4f4f53 82%,#47474b 100%);"></div>
<svg style="left:208px;top:151px" width="640" height="360" viewBox="208 151 640 360"><circle cx="528.9" cy="330.9" r="172.300" fill="#262628"/><circle cx="528.5" cy="330.5" r="171.500" fill="#dedede"/><circle cx="528.5" cy="330.5" r="159" fill="#3c3c3c"/><circle cx="529.1" cy="331.1" r="158.200" fill="#9b9b9b"/><circle cx="528.5" cy="330.5" r="136" fill="#dcdcdc"/></svg>
<div style="left:68px;top:330px;width:921px;height:1px;background:#5ce0e6;"></div>
<div style="left:528px;top:118px;width:1px;height:427px;background:#5ce0e6;"></div>
<div style="left:989px;top:118px;width:15px;height:427px;background:#464646;border-left:1.500px solid #0c0c0c;"></div>
<div style="left:991px;top:509px;width:12px;height:1px;background:#2a2a2a;"></div>
<div style="left:991px;top:527px;width:12px;height:1px;background:#2a2a2a;"></div>
<svg style="left:993px;top:515px" width="8" height="5" viewBox="0 0 8 5"><path d="M0 5h8L4 0z" fill="#606060"/></svg>
<svg style="left:993px;top:534px" width="8" height="5" viewBox="0 0 8 5"><path d="M0 0h8L4 5z" fill="#606060"/></svg>
<div style="left:68px;top:545px;width:936px;height:15px;background:#484848;border-top:1px solid #1c1c1c;"></div>
<div style="left:68px;top:546px;width:60px;height:13px;background:#525252;border-right:1px solid #2a2a2a;"></div>
<div style="left:128px;top:546px;width:184px;height:13px;background:#525252;border-right:1px solid #2a2a2a;"></div>
<div class="t" style="left:87.5px;top:547.3px;font-size:12px;color:#f0f0f0;transform:scaleX(0.9576);transform-origin:0 0;">50%</div>
<div class="t" style="left:131.0px;top:547.3px;font-size:12px;color:#f0f0f0;transform:scaleX(0.9195);transform-origin:0 0;">17.778 inches x 10 inches (72 p...</div>
<svg style="left:302px;top:548px" width="7" height="9" viewBox="0 0 7 9"><path d="M0 0v9l6.500-4.500z" fill="#111"/></svg>
<div style="left:953px;top:546px;width:1px;height:13px;background:#2a2a2a;"></div>
<div style="left:972px;top:546px;width:1px;height:13px;background:#2a2a2a;"></div>
<div style="left:990px;top:546px;width:1px;height:13px;background:#2a2a2a;"></div>
<svg style="left:959px;top:549px" width="5" height="8" viewBox="0 0 5 8"><path d="M5 0v8L0 4z" fill="#606060"/></svg>
<svg style="left:980px;top:549px" width="5" height="8" viewBox="0 0 5 8"><path d="M0 0v8l5-4z" fill="#606060"/></svg>
<!-- sec_right -->
<div style="left:1004px;top:130px;width:276px;height:585px;background:#4d4d4d;border-left:1px solid #262626;"></div>
<div style="left:1005px;top:130px;width:275px;height:18px;background:#2c2c2c;border-top:1px solid #1a1a1a;"></div>
<div style="left:1005px;top:131px;width:52px;height:17px;background:#4d4d4d;border-top:1px solid #606060;"></div>
<div style="left:1057px;top:131px;width:57px;height:17px;background:#3a3a3a;border-left:1px solid #222;border-right:1px solid #222;"></div>
<div class="t" style="left:1011.0px;top:134.7px;font-size:10px;color:#fff;font-weight:700;transform:scaleX(0.8451);transform-origin:0 0;">EFFECTS</div>
<div class="t" style="left:1063.0px;top:134.7px;font-size:10px;color:#c4c4c4;font-weight:700;transform:scaleX(0.9311);transform-origin:0 0;">CONTENT</div>
<svg style="left:1261px;top:136px" width="16" height="9" viewBox="0 0 16 9"><path d="M0 2h5L2.500 5z" fill="#e0e0e0"/><g fill="#e0e0e0"><rect x="6" y="0" width="9" height="1"/><rect x="6" y="2" width="9" height="1"/><rect x="6" y="4" width="9" height="1"/><rect x="6" y="6" width="9" height="1"/></g></svg>
<div style="left:1014px;top:153px;width:24px;height:24px;background:#363636;border:1px solid #2a2a2a;"></div>
<svg style="left:1016px;top:155px" width="20" height="20" viewBox="0 0 20 20"><circle cx="11.500" cy="6" r="5" fill="#8a7aa8"/><circle cx="6" cy="10" r="5" fill="#7aa83a"/><circle cx="13" cy="14" r="5" fill="#c8a02a"/></svg>
<svg style="left:1045px;top:156px" width="18" height="17" viewBox="0 0 18 17"><rect x="4" y="1" width="13" height="8.500" fill="#4a8a7a" stroke="#8ab0a8" stroke-width=".8"/><rect x="1" y="6.500" width="13" height="8.500" fill="#2a78b8" stroke="#a8d0f0" stroke-width="1"/></svg>
<svg style="left:1072px;top:154px" width="20" height="20" viewBox="0 0 20 20"><rect x="4.500" y="7" width="12" height="9.500" fill="#3f9ad8" stroke="#e0eef8" stroke-width="1.200"/><g fill="#c8c8c8"><circle cx="2" cy="9" r=".6"/><circle cx="4" cy="4" r=".6"/><circle cx="8" cy="2" r=".6"/><circle cx="13" cy="2" r=".6"/><circle cx="17" cy="4" r=".6"/><circle cx="19" cy="9" r=".6"/></g></svg>
<svg style="left:1102px;top:153px" width="22" height="24" viewBox="0 0 22 24"><rect x="3" y="6" width="13" height="10" fill="#2f88c8" stroke="#e0eef8" stroke-width="1.200"/><circle cx="14" cy="5" r="6" fill="#b03a78" opacity=".35"/><g fill="#e0b0cc"><circle cx="4" cy="3" r=".6"/><circle cx="9" cy="1.500" r=".6"/><circle cx="14" cy="2" r=".6"/><circle cx="19" cy="4" r=".6"/><circle cx="20" cy="9" r=".6"/></g><text x="9" y="21" font-family="Liberation Serif,serif" font-style="italic" font-size="13" fill="#fff">fx</text></svg>
<div style="left:1131px;top:155.5px;width:117px;height:18px;background:linear-gradient(#5e5e5e,#484848);border:1px solid #1e1e1e;box-shadow:inset 0 1px 0 #7a7a7a;"></div>
<div class="t" style="left:1135.0px;top:157.1px;font-size:13.5px;color:#f0f0f0;letter-spacing:0.07px;">Artistic</div>
<svg style="left:1234px;top:162px" width="9" height="5" viewBox="0 0 9 5"><path d="M0 0h8L4 4.500z" fill="#fff"/></svg>
<div style="left:1006px;top:182px;width:266px;height:160px;background:#585858;border-top:1px solid #2a2a2a;border-bottom:1px solid #2a2a2a;"></div>
<div style="left:1256px;top:183.5px;width:15px;height:158.5px;background:#3c3c3c;border:1px solid #1e1e1e;"></div>
<div style="left:1257px;top:184.5px;width:13px;height:80px;background:linear-gradient(90deg,#727272,#5e5e5e);"></div>
<div style="left:1261.5px;top:221.5px;width:5px;height:1px;background:#222;"></div>
<div style="left:1261.5px;top:224px;width:5px;height:1px;background:#222;"></div>
<div style="left:1261.5px;top:226.5px;width:5px;height:1px;background:#222;"></div>
<div style="left:1257px;top:305.5px;width:13px;height:18px;background:linear-gradient(#747474,#626262);border-top:1px solid #1e1e1e;border-bottom:1px solid #1e1e1e;"></div>
<div style="left:1257px;top:324.5px;width:13px;height:16.5px;background:linear-gradient(#747474,#626262);"></div>
<svg style="left:1259.5px;top:311.5px" width="8" height="5" viewBox="0 0 8 5"><path d="M0 5h8L4 0z" fill="#3c3c3c"/></svg>
<svg style="left:1259.5px;top:331px" width="8" height="5" viewBox="0 0 8 5"><path d="M0 0h8L4 5z" fill="#3c3c3c"/></svg>
<svg style="left:1015px;top:193px;overflow:hidden" width="56" height="56" viewBox="0 0 56 56"><defs><linearGradient id="g1015_193" x1="1" y1="0" x2="0" y2="1"><stop offset="0" stop-color="#ffffff"/><stop offset="1" stop-color="#f4f6fa"/></linearGradient><clipPath id="c1015_193"><rect x="0" y="0" width="56" height="56"/></clipPath></defs><g clip-path="url(#c1015_193)"><rect x="0" y="0" width="56" height="56" fill="#ffffff"/><rect x="0" y="0" width="56" height="56" fill="url(#g1015_193)"/><path d="M30 0H56V22L34 36 22 26z" fill="#ffffff" opacity="0"/><g stroke="#8a94b0" stroke-width="3.500" opacity=".7"><path d="M2 34L34 2M4 46L48 6M16 54L56 18M0 22L16 6M30 56L56 34"/></g><g stroke="#3a4468" stroke-width="2" opacity=".6"><path d="M6 40L20 26M10 48L40 52"/></g><ellipse cx="36.5" cy="43.2" rx="18.6" ry="7.4" fill="#2a3050"/><ellipse cx="29.1" cy="31.4" rx="14.8" ry="14.4" fill="#8fae3c"/><ellipse cx="25.9" cy="29.6" rx="9.2" ry="10.7" fill="#b4cc68"/><ellipse cx="37.3" cy="35.1" rx="5.9" ry="8.9" fill="#7a963a" opacity=".8"/><g stroke="#ffffff" stroke-width="2" opacity=".7"><path d="M22 44L38 30M28 48L44 36"/></g></g><rect x=".5" y=".5" width="55" height="55" fill="none" stroke="#0a0a0a" stroke-width="1"/></svg>
<svg style="left:1075px;top:193px;overflow:hidden" width="56" height="56" viewBox="0 0 56 56"><defs><linearGradient id="g1075_193" x1="1" y1="0" x2="0" y2="1"><stop offset="0" stop-color="#78888e"/><stop offset="1" stop-color="#6a7a92"/></linearGradient><clipPath id="c1075_193"><rect x="0" y="0" width="56" height="56"/></clipPath></defs><g clip-path="url(#c1075_193)"><rect x="0" y="0" width="56" height="56" fill="#78888e"/><rect x="0" y="0" width="56" height="56" fill="url(#g1075_193)"/><path d="M30 0H56V22L34 36 22 26z" fill="#a4b6dc" opacity="1"/><path d="M0 20C10 14 22 16 30 24L40 40 0 44z" fill="#4a5468"/><ellipse cx="36.5" cy="43.2" rx="18.6" ry="7.4" fill="#3c465c"/><ellipse cx="29.1" cy="31.4" rx="14.8" ry="14.4" fill="#5c6870"/><ellipse cx="25.9" cy="29.6" rx="9.2" ry="10.7" fill="#5c6870"/><ellipse cx="37.3" cy="35.1" rx="5.9" ry="8.9" fill="#5c6870" opacity=".8"/><path d="M16 26c4-3 8-3 9-1l-1 16c-2 2-6 1-8-2-2-4-2-9 0-13z" fill="#b8c65a"/><path d="M25 25c2-2 6-2 7 0v14c-2 3-5 4-8 3z" fill="#7a8c98"/></g><rect x=".5" y=".5" width="55" height="55" fill="none" stroke="#0a0a0a" stroke-width="1"/></svg>
<svg style="left:1135px;top:193px;overflow:hidden" width="56" height="56" viewBox="0 0 56 56"><defs><linearGradient id="g1135_193" x1="1" y1="0" x2="0" y2="1"><stop offset="0" stop-color="#a0aed4"/><stop offset="1" stop-color="#465176"/></linearGradient><clipPath id="c1135_193"><rect x="0" y="0" width="56" height="56"/></clipPath></defs><g clip-path="url(#c1135_193)"><rect x="0" y="0" width="56" height="56" fill="#66739c"/><rect x="0" y="0" width="56" height="56" fill="url(#g1135_193)"/><path d="M30 0H56V22L34 36 22 26z" fill="#b2c0e4" opacity="0.75"/><ellipse cx="36.5" cy="43.2" rx="18.6" ry="7.4" fill="#1e2442"/><ellipse cx="29.1" cy="31.4" rx="14.8" ry="14.4" fill="#88a43c"/><ellipse cx="25.9" cy="29.6" rx="9.2" ry="10.7" fill="#aec45c"/><ellipse cx="37.3" cy="35.1" rx="5.9" ry="8.9" fill="#6c8836" opacity=".8"/></g><rect x=".5" y=".5" width="55" height="55" fill="none" stroke="#0a0a0a" stroke-width="1"/></svg>
<svg style="left:1195px;top:193px;overflow:hidden" width="56" height="56" viewBox="0 0 56 56"><defs><linearGradient id="g1195_193" x1="1" y1="0" x2="0" y2="1"><stop offset="0" stop-color="#98acdc"/><stop offset="1" stop-color="#384684"/></linearGradient><clipPath id="c1195_193"><rect x="0" y="0" width="56" height="56"/></clipPath></defs><g clip-path="url(#c1195_193)"><rect x="0" y="0" width="56" height="56" fill="#6278b4"/><rect x="0" y="0" width="56" height="56" fill="url(#g1195_193)"/><path d="M30 0H56V22L34 36 22 26z" fill="#a8b8e4" opacity="0.5"/><ellipse cx="36.5" cy="43.2" rx="18.6" ry="7.4" fill="#283266"/><ellipse cx="29.1" cy="31.4" rx="14.8" ry="14.4" fill="#a6c23e"/><ellipse cx="25.9" cy="29.6" rx="9.2" ry="10.7" fill="#c4d860"/><ellipse cx="37.3" cy="35.1" rx="5.9" ry="8.9" fill="#96b43c" opacity=".8"/></g><rect x=".5" y=".5" width="55" height="55" fill="none" stroke="#0a0a0a" stroke-width="1"/></svg>
<svg style="left:1015px;top:253px;overflow:hidden" width="56" height="56" viewBox="0 0 56 56"><defs><linearGradient id="g1015_253" x1="1" y1="0" x2="0" y2="1"><stop offset="0" stop-color="#a4bae8"/><stop offset="1" stop-color="#0c1226"/></linearGradient><clipPath id="c1015_253"><rect x="0" y="0" width="56" height="56"/></clipPath></defs><g clip-path="url(#c1015_253)"><rect x="0" y="0" width="56" height="56" fill="#647cb4"/><rect x="0" y="0" width="56" height="56" fill="url(#g1015_253)"/><path d="M30 0H56V22L34 36 22 26z" fill="#a8c0f0" opacity="0.8"/><path d="M0 22C14 16 40 20 56 30V56H0z" fill="#0e1428" opacity=".85"/><ellipse cx="36.5" cy="43.2" rx="18.6" ry="7.4" fill="#080c18"/><ellipse cx="29.1" cy="31.4" rx="14.8" ry="14.4" fill="#6e8a2e"/><ellipse cx="25.9" cy="29.6" rx="9.2" ry="10.7" fill="#a8c440"/><ellipse cx="37.3" cy="35.1" rx="5.9" ry="8.9" fill="#2a3a20" opacity=".8"/></g><rect x=".5" y=".5" width="55" height="55" fill="none" stroke="#0a0a0a" stroke-width="1"/></svg>
<svg style="left:1075px;top:253px;overflow:hidden" width="56" height="56" viewBox="0 0 56 56"><defs><linearGradient id="g1075_253" x1="1" y1="0" x2="0" y2="1"><stop offset="0" stop-color="#b8bace"/><stop offset="1" stop-color="#9a9cb4"/></linearGradient><clipPath id="c1075_253"><rect x="0" y="0" width="56" height="56"/></clipPath></defs><g clip-path="url(#c1075_253)"><rect x="0" y="0" width="56" height="56" fill="#a2a4b8"/><rect x="0" y="0" width="56" height="56" fill="url(#g1075_253)"/><path d="M30 0H56V22L34 36 22 26z" fill="#c4c8dc" opacity="0.7"/><path d="M0 34C16 30 40 34 56 30V56H0z" fill="#a0dc50" opacity=".75"/><ellipse cx="36.5" cy="43.2" rx="18.6" ry="7.4" fill="#98d448"/><ellipse cx="29.1" cy="31.4" rx="14.8" ry="14.4" fill="#9698a6"/><ellipse cx="25.9" cy="29.6" rx="9.2" ry="10.7" fill="#b4b6c2"/><ellipse cx="37.3" cy="35.1" rx="5.9" ry="8.9" fill="#8a8c9c" opacity=".8"/></g><rect x=".5" y=".5" width="55" height="55" fill="none" stroke="#0a0a0a" stroke-width="1"/></svg>
<svg style="left:1135px;top:253px;overflow:hidden" width="56" height="56" viewBox="0 0 56 56"><defs><linearGradient id="g1135_253" x1="1" y1="0" x2="0" y2="1"><stop offset="0" stop-color="#98aad6"/><stop offset="1" stop-color="#465176"/></linearGradient><clipPath id="c1135_253"><rect x="0" y="0" width="56" height="56"/></clipPath></defs><g clip-path="url(#c1135_253)"><rect x="0" y="0" width="56" height="56" fill="#65749f"/><rect x="0" y="0" width="56" height="56" fill="url(#g1135_253)"/><path d="M30 0H56V22L34 36 22 26z" fill="#a8bcea" opacity="0.75"/><ellipse cx="36.5" cy="43.2" rx="18.6" ry="7.4" fill="#1c2448"/><ellipse cx="29.1" cy="31.4" rx="14.8" ry="14.4" fill="#98b63a"/><ellipse cx="25.9" cy="29.6" rx="9.2" ry="10.7" fill="#c8da6c"/><ellipse cx="37.3" cy="35.1" rx="5.9" ry="8.9" fill="#82a036" opacity=".8"/></g><rect x=".5" y=".5" width="55" height="55" fill="none" stroke="#0a0a0a" stroke-width="1"/></svg>
<svg style="left:1195px;top:253px;overflow:hidden" width="56" height="56" viewBox="0 0 56 56"><defs><linearGradient id="g1195_253" x1="1" y1="0" x2="0" y2="1"><stop offset="0" stop-color="#90a2d0"/><stop offset="1" stop-color="#3e4872"/></linearGradient><clipPath id="c1195_253"><rect x="0" y="0" width="56" height="56"/></clipPath></defs><g clip-path="url(#c1195_253)"><rect x="0" y="0" width="56" height="56" fill="#62709c"/><rect x="0" y="0" width="56" height="56" fill="url(#g1195_253)"/><path d="M30 0H56V22L34 36 22 26z" fill="#a4b8e6" opacity="0.7"/><ellipse cx="36.5" cy="43.2" rx="18.6" ry="7.4" fill="#181e40"/><ellipse cx="29.1" cy="31.4" rx="14.8" ry="14.4" fill="#92b03c"/><ellipse cx="25.9" cy="29.6" rx="9.2" ry="10.7" fill="#b6cc5a"/><ellipse cx="37.3" cy="35.1" rx="5.9" ry="8.9" fill="#7a9636" opacity=".8"/></g><rect x=".5" y=".5" width="55" height="55" fill="none" stroke="#0a0a0a" stroke-width="1"/></svg>
<svg style="left:1015px;top:313px;overflow:hidden" width="56" height="29" viewBox="0 0 56 29"><defs><linearGradient id="g1015_313" x1="1" y1="0" x2="0" y2="1"><stop offset="0" stop-color="#98aad8"/><stop offset="1" stop-color="#506090"/></linearGradient><clipPath id="c1015_313"><rect x="0" y="0" width="56" height="29"/></clipPath></defs><g clip-path="url(#c1015_313)"><rect x="0" y="0" width="56" height="56" fill="#6678aa"/><rect x="0" y="0" width="56" height="56" fill="url(#g1015_313)"/><path d="M30 0H56V22L34 36 22 26z" fill="#b0c4ee" opacity="0.6"/><ellipse cx="36.5" cy="43.2" rx="18.6" ry="7.4" fill="#2a3460"/><ellipse cx="29.1" cy="31.4" rx="14.8" ry="14.4" fill="#98b83a"/><ellipse cx="25.9" cy="29.6" rx="9.2" ry="10.7" fill="#bcd458"/><ellipse cx="37.3" cy="35.1" rx="5.9" ry="8.9" fill="#7e9c34" opacity=".8"/></g><rect x=".5" y=".5" width="55" height="31" fill="none" stroke="#0a0a0a" stroke-width="1"/></svg>
<svg style="left:1075px;top:313px;overflow:hidden" width="56" height="29" viewBox="0 0 56 29"><defs><linearGradient id="g1075_313" x1="1" y1="0" x2="0" y2="1"><stop offset="0" stop-color="#6a88d0"/><stop offset="1" stop-color="#1c2c80"/></linearGradient><clipPath id="c1075_313"><rect x="0" y="0" width="56" height="29"/></clipPath></defs><g clip-path="url(#c1075_313)"><rect x="0" y="0" width="56" height="56" fill="#5068b8"/><rect x="0" y="0" width="56" height="56" fill="url(#g1075_313)"/><path d="M30 0H56V22L34 36 22 26z" fill="#a8c0f0" opacity="0.5"/><g stroke="#dce8fa" stroke-width="1.600" opacity=".75"><path d="M22 3h30M18 7h34M26 11h26M20 15h30M24 19h24"/></g><g stroke="#1a2a9a" stroke-width="1.600" opacity=".7"><path d="M4 9h16M2 14h16M6 19h14M4 24h12"/></g><ellipse cx="36.5" cy="43.2" rx="18.6" ry="7.4" fill="#2a3460"/><ellipse cx="29.1" cy="31.4" rx="14.8" ry="14.4" fill="#a8c83a"/><ellipse cx="25.9" cy="29.6" rx="9.2" ry="10.7" fill="#d0e468"/><ellipse cx="37.3" cy="35.1" rx="5.9" ry="8.9" fill="#7e9c34" opacity=".8"/></g><rect x=".5" y=".5" width="55" height="31" fill="none" stroke="#0a0a0a" stroke-width="1"/></svg>
<svg style="left:1135px;top:313px;overflow:hidden" width="56" height="29" viewBox="0 0 56 29"><defs><linearGradient id="g1135_313" x1="1" y1="0" x2="0" y2="1"><stop offset="0" stop-color="#9eb0dc"/><stop offset="1" stop-color="#506090"/></linearGradient><clipPath id="c1135_313"><rect x="0" y="0" width="56" height="29"/></clipPath></defs><g clip-path="url(#c1135_313)"><rect x="0" y="0" width="56" height="56" fill="#6678aa"/><rect x="0" y="0" width="56" height="56" fill="url(#g1135_313)"/><path d="M30 0H56V22L34 36 22 26z" fill="#b0c4ee" opacity="0.6"/><ellipse cx="36.5" cy="43.2" rx="18.6" ry="7.4" fill="#2a3460"/><ellipse cx="29.1" cy="31.4" rx="14.8" ry="14.4" fill="#98b83a"/><ellipse cx="25.9" cy="29.6" rx="9.2" ry="10.7" fill="#bcd458"/><ellipse cx="37.3" cy="35.1" rx="5.9" ry="8.9" fill="#7e9c34" opacity=".8"/></g><rect x=".5" y=".5" width="55" height="31" fill="none" stroke="#0a0a0a" stroke-width="1"/></svg>
<svg style="left:1195px;top:313px;overflow:hidden" width="56" height="29" viewBox="0 0 56 29"><defs><linearGradient id="g1195_313" x1="1" y1="0" x2="0" y2="1"><stop offset="0" stop-color="#8ea2d2"/><stop offset="1" stop-color="#48588a"/></linearGradient><clipPath id="c1195_313"><rect x="0" y="0" width="56" height="29"/></clipPath></defs><g clip-path="url(#c1195_313)"><rect x="0" y="0" width="56" height="56" fill="#6474a6"/><rect x="0" y="0" width="56" height="56" fill="url(#g1195_313)"/><path d="M30 0H56V22L34 36 22 26z" fill="#a8bcea" opacity="0.6"/><ellipse cx="36.5" cy="43.2" rx="18.6" ry="7.4" fill="#2a3460"/><ellipse cx="29.1" cy="31.4" rx="14.8" ry="14.4" fill="#98b83a"/><ellipse cx="25.9" cy="29.6" rx="9.2" ry="10.7" fill="#bcd458"/><ellipse cx="37.3" cy="35.1" rx="5.9" ry="8.9" fill="#7e9c34" opacity=".8"/></g><rect x=".5" y=".5" width="55" height="31" fill="none" stroke="#0a0a0a" stroke-width="1"/></svg>
<div style="left:1162.5px;top:346.5px;width:86.5px;height:16.5px;background:#555;border:1px solid #3a3a3a;box-shadow:inset 0 1px 0 #666;"></div>
<div class="t" style="left:1188.5px;top:347.9px;font-size:13.5px;color:#8a8a8a;letter-spacing:-0.19px;">Apply</div>
<div style="left:1271px;top:366px;width:8px;height:9px;background-image:linear-gradient(#4d4d4d 1px,transparent 1px),linear-gradient(90deg,#9a9a9a 1px,transparent 1px);background-size:2px 2px;clip-path:polygon(100% 0,100% 100%,0 100%);"></div>
<div style="left:1005px;top:376.5px;width:275px;height:2px;background:#0c0c0c;"></div>
<div style="left:1005px;top:378.5px;width:275px;height:17px;background:#2c2c2c;"></div>
<div style="left:1005px;top:378px;width:47px;height:17.5px;background:#4d4d4d;border-top:1px solid #606060;"></div>
<div class="t" style="left:1011.5px;top:382.2px;font-size:10px;color:#fff;font-weight:700;transform:scaleX(0.8576);transform-origin:0 0;">LAYERS</div>
<svg style="left:1261px;top:383px" width="16" height="9" viewBox="0 0 16 9"><path d="M0 2h5L2.500 5z" fill="#e0e0e0"/><g fill="#e0e0e0"><rect x="6" y="0" width="9" height="1"/><rect x="6" y="2" width="9" height="1"/><rect x="6" y="4" width="9" height="1"/><rect x="6" y="6" width="9" height="1"/></g></svg>
<div style="left:1011.5px;top:399.5px;width:137px;height:18px;background:linear-gradient(#5e5e5e,#484848);border:1px solid #1e1e1e;box-shadow:inset 0 1px 0 #7a7a7a;"></div>
<div class="t" style="left:1015.5px;top:401.1px;font-size:13.5px;color:#f0f0f0;transform:scaleX(0.9309);transform-origin:0 0;">Normal</div>
<svg style="left:1135px;top:406px" width="9" height="5" viewBox="0 0 9 5"><path d="M0 0h8L4 4.500z" fill="#fff"/></svg>
<div class="t" style="left:1154.5px;top:401.1px;font-size:13.5px;color:#e6e6e6;transform:scaleX(0.9290);transform-origin:0 0;">Opacity:</div>
<div style="left:1208.5px;top:399.5px;width:54.5px;height:18px;background:linear-gradient(#5a5a5a,#484848);border:1px solid #1e1e1e;"></div>
<div style="left:1243px;top:400.5px;width:1px;height:16px;background:#2a2a2a;"></div>
<div class="t" style="left:1211.0px;top:401.1px;font-size:13.5px;color:#f0f0f0;transform:scaleX(0.8689);transform-origin:0 0;">100%</div>
<svg style="left:1250px;top:406px" width="9" height="5" viewBox="0 0 9 5"><path d="M0 0h8L4 4.500z" fill="#fff"/></svg>
<div style="left:1005px;top:424px;width:257.5px;height:244px;background:#5e5e5e;border-top:1px solid #1e1e1e;border-bottom:1px solid #1e1e1e;"></div>
<div style="left:1262px;top:424px;width:15.5px;height:244px;background:#3a3a3a;border:1px solid #1e1e1e;"></div>
<div style="left:1263px;top:631px;width:13.5px;height:18px;background:#4a4a4a;border-top:1px solid #1e1e1e;border-bottom:1px solid #1e1e1e;"></div>
<div style="left:1263px;top:650px;width:13.5px;height:17px;background:#4a4a4a;"></div>
<svg style="left:1266px;top:637px" width="8" height="5" viewBox="0 0 8 5"><path d="M0 5h8L4 0z" fill="#7a7a7a"/></svg>
<svg style="left:1266px;top:657px" width="8" height="5" viewBox="0 0 8 5"><path d="M0 0h8L4 5z" fill="#7a7a7a"/></svg>
<div style="left:1005px;top:424.5px;width:257.5px;height:40px;background:#4d4d4d;border-bottom:1px solid #262626;"></div>
<div style="left:1005px;top:424.5px;width:22.5px;height:40px;background:#4d4d4d;border-right:1px solid #262626;border-bottom:1px solid #262626;"></div>
<div style="left:1007.5px;top:436.0px;width:16.5px;height:16.5px;background:#444;border:1px solid #3a3a3a;"></div>
<svg style="left:1008.5px;top:437.5px" width="15" height="10" viewBox="0 0 15 10"><path d="M.5 5C3 .2 12 .2 14.500 5 12 9.800 3 9.800 .5 5z" fill="#dedede" stroke="#1a1a1a" stroke-width=".9"/><circle cx="7.500" cy="4.800" r="2.900" fill="#1a1a1a"/><circle cx="6.600" cy="3.800" r=".9" fill="#fff"/></svg>
<div style="left:1005px;top:464.5px;width:257.5px;height:40px;background:#4d4d4d;border-bottom:1px solid #262626;"></div>
<div style="left:1005px;top:464.5px;width:22.5px;height:40px;background:#4d4d4d;border-right:1px solid #262626;border-bottom:1px solid #262626;"></div>
<div style="left:1027.5px;top:464.5px;width:234.5px;height:39.5px;background:#b9d8ff;"></div>
<div style="left:1007.5px;top:476.0px;width:16.5px;height:16.5px;background:#444;border:1px solid #3a3a3a;"></div>
<svg style="left:1008.5px;top:477.5px" width="15" height="10" viewBox="0 0 15 10"><path d="M.5 5C3 .2 12 .2 14.500 5 12 9.800 3 9.800 .5 5z" fill="#dedede" stroke="#1a1a1a" stroke-width=".9"/><circle cx="7.500" cy="4.800" r="2.900" fill="#1a1a1a"/><circle cx="6.600" cy="3.800" r=".9" fill="#fff"/></svg>
<div style="left:1005px;top:504.5px;width:257.5px;height:40px;background:#4d4d4d;border-bottom:1px solid #262626;"></div>
<div style="left:1005px;top:504.5px;width:22.5px;height:40px;background:#4d4d4d;border-right:1px solid #262626;border-bottom:1px solid #262626;"></div>
<div style="left:1007.5px;top:516.0px;width:16.5px;height:16.5px;background:#444;border:1px solid #3a3a3a;"></div>
<svg style="left:1008.5px;top:517.5px" width="15" height="10" viewBox="0 0 15 10"><path d="M.5 5C3 .2 12 .2 14.500 5 12 9.800 3 9.800 .5 5z" fill="#dedede" stroke="#1a1a1a" stroke-width=".9"/><circle cx="7.500" cy="4.800" r="2.900" fill="#1a1a1a"/><circle cx="6.600" cy="3.800" r=".9" fill="#fff"/></svg>
<div style="left:1005px;top:544.5px;width:257.5px;height:40px;background:#4d4d4d;border-bottom:1px solid #262626;"></div>
<div style="left:1005px;top:544.5px;width:22.5px;height:40px;background:#4d4d4d;border-right:1px solid #262626;border-bottom:1px solid #262626;"></div>
<div style="left:1007.5px;top:556.0px;width:16.5px;height:16.5px;background:#444;border:1px solid #3a3a3a;"></div>
<svg style="left:1008.5px;top:557.5px" width="15" height="10" viewBox="0 0 15 10"><path d="M.5 5C3 .2 12 .2 14.500 5 12 9.800 3 9.800 .5 5z" fill="#dedede" stroke="#1a1a1a" stroke-width=".9"/><circle cx="7.500" cy="4.800" r="2.900" fill="#1a1a1a"/><circle cx="6.600" cy="3.800" r=".9" fill="#fff"/></svg>
<div style="left:1031px;top:428px;width:56px;height:32.5px;background:#7c7c7c;border:1.500px solid #1c1c1c;"></div>
<div style="left:1047.5px;top:432px;width:24px;height:24px;background:#fff;border-radius:50%;border:1px solid #111;"></div>
<div class="t" style="left:1095.5px;top:438.6px;font-size:13.5px;color:#e0e0e0;transform:scaleX(0.8848);transform-origin:0 0;">Shape 2</div>
<div style="left:1029px;top:466px;width:59.5px;height:37px;background:#e8e8e8;border:1px solid #111;"></div>
<div style="left:1031.5px;top:468.5px;width:55px;height:32px;background:#7c7c7c;border:1px solid #111;"></div>
<div style="left:1044.5px;top:469.5px;width:29.5px;height:29.5px;background:#7c7c7c;border-radius:50%;border:2px solid #1e1e1e;"></div>
<div style="left:1044.5px;top:469.5px;width:29.5px;height:29.5px;border-radius:50%;border:1px dotted rgba(255,255,255,.55);"></div>
<div class="t" style="left:1095.5px;top:478.8px;font-size:13.5px;color:#000;font-weight:700;transform:scaleX(0.9135);transform-origin:0 0;">Shape 1 copy</div>
<div class="t" style="left:1233.0px;top:478.6px;font-size:14px;color:#222;font-weight:700;font-style:italic;font-family:&quot;Liberation Serif&quot;,serif;">fx</div>
<div style="left:1031px;top:508px;width:56px;height:32.5px;background:#7c7c7c;border:1.500px solid #1c1c1c;"></div>
<div style="left:1044.5px;top:509.5px;width:29.5px;height:29.5px;background:#fff;border-radius:50%;border:1px solid #111;"></div>
<div class="t" style="left:1095.5px;top:518.6px;font-size:13.5px;color:#e0e0e0;transform:scaleX(0.8848);transform-origin:0 0;">Shape 1</div>
<div style="left:1031px;top:548px;width:56px;height:32.5px;background:linear-gradient(#a2a2a2,#7a7a7c 50%,#48484c);border:1.500px solid #1c1c1c;"></div>
<div class="t" style="left:1095.5px;top:558.6px;font-size:13.5px;color:#e0e0e0;font-style:italic;transform:scaleX(0.9438);transform-origin:0 0;">Background</div>
<svg style="left:1232px;top:558px" width="14" height="13" viewBox="0 0 14 13"><path d="M3.500 6V3.800a3.500 3.500 0 0 1 7 0V6" fill="none" stroke="#a8a8a8" stroke-width="1.600"/><rect x="1" y="5.500" width="12" height="7.500" fill="#b0b0b0"/></svg>
<svg style="left:1016.5px;top:675px" width="13" height="13" viewBox="0 0 13 13"><rect x="0" y="0" width="13" height="13" fill="#9a9a9a"/><path d="M0 0h13v13z" fill="#787878"/><path d="M0 6l7 7H0z" fill="#c4c4c4" transform="translate(0,0)"/></svg>
<div style="left:1042.5px;top:675px;width:14.5px;height:13.5px;background:#d8d8d8;border:1.500px solid #2a2a2a;"></div>
<div style="left:1046px;top:678px;width:7.5px;height:7.5px;background:#fff;border-radius:50%;border:1px solid #2a2a2a;"></div>
<svg style="left:1071.5px;top:675px" width="13" height="13" viewBox="0 0 13 13"><circle cx="6.500" cy="6.500" r="5.800" fill="#f0f0f0"/><path d="M10.600 2.400A5.800 5.800 0 0 0 2.400 10.600z" fill="#2a2a2a"/></svg>
<svg style="left:1085px;top:688px" width="4" height="3" viewBox="0 0 4 3"><path d="M0 0h4L2 2.500z" fill="#111"/></svg>
<svg style="left:1099px;top:673px" width="10" height="17" viewBox="0 0 10 17"><rect x="1.500" y="1" width="7" height="8" rx="3.500" fill="none" stroke="#666" stroke-width="1.800"/><rect x="1.500" y="8" width="7" height="8" rx="3.500" fill="none" stroke="#666" stroke-width="1.800"/></svg>
<div class="t" style="left:1128.5px;top:675.6px;font-size:13.5px;color:#e6e6e6;transform:scaleX(0.9142);transform-origin:0 0;">Lock:</div>
<div style="left:1163.5px;top:675px;width:12.5px;height:13px;background:conic-gradient(#9a9a9a 25%,#6e6e6e 0 50%,#9a9a9a 0 75%,#6e6e6e 0);background-size:8px 8px;"></div>
<svg style="left:1185.5px;top:675px" width="14" height="14" viewBox="0 0 14 14"><path d="M3.500 6V4a3.500 3.500 0 0 1 7 0V6" fill="none" stroke="#909090" stroke-width="1.600"/><rect x="1" y="6" width="12" height="7.500" fill="#9a9a9a"/></svg>
<svg style="left:1243.5px;top:674px" width="12" height="15" viewBox="0 0 12 15"><path d="M4 1.500h4M0.500 3.500h11M2 4l.8 10h6.400L10 4" fill="none" stroke="#6a6a6a" stroke-width="1.500"/><path d="M4.500 6v6M6 6v6M7.500 6v6" stroke="#6a6a6a" stroke-width=".8"/></svg>
<div style="left:1005px;top:695px;width:275px;height:18.5px;background:#2c2c2c;border-top:1px solid #1a1a1a;"></div>
<div style="left:1005px;top:696px;width:79.5px;height:17.5px;background:#4d4d4d;border-top:1px solid #606060;"></div>
<div class="t" style="left:1011.0px;top:700.2px;font-size:10px;color:#fff;font-weight:700;transform:scaleX(0.8866);transform-origin:0 0;">ADJUSTMENTS</div>
<svg style="left:1261px;top:700px" width="16" height="9" viewBox="0 0 16 9"><path d="M0 2h5L2.500 5z" fill="#e0e0e0"/><g fill="#e0e0e0"><rect x="6" y="0" width="9" height="1"/><rect x="6" y="2" width="9" height="1"/><rect x="6" y="4" width="9" height="1"/><rect x="6" y="6" width="9" height="1"/></g></svg>
<div style="left:1005px;top:713px;width:275px;height:2px;background:#3e3e3e;"></div>
<!-- sec_bin -->
<div style="left:68px;top:559.5px;width:936px;height:17.5px;background:#2c2c2c;border-top:1px solid #1a1a1a;"></div>
<div style="left:69px;top:560.5px;width:71px;height:16.5px;background:#4d4d4d;border-top:1px solid #606060;"></div>
<div class="t" style="left:75.0px;top:564.2px;font-size:10px;color:#fff;font-weight:700;transform:scaleX(0.8776);transform-origin:0 0;">PROJECT BIN</div>
<svg style="left:984px;top:565px" width="16" height="9" viewBox="0 0 16 9"><path d="M0 2h5L2.500 5z" fill="#e0e0e0"/><g fill="#e0e0e0"><rect x="6" y="0" width="9" height="1"/><rect x="6" y="2" width="9" height="1"/><rect x="6" y="4" width="9" height="1"/><rect x="6" y="6" width="9" height="1"/></g></svg>
<div style="left:68px;top:577px;width:936px;height:29px;background:#4d4d4d;"></div>
<div style="left:74px;top:583.5px;width:177px;height:17px;background:linear-gradient(#5e5e5e,#484848);border:1px solid #1e1e1e;box-shadow:inset 0 1px 0 #7a7a7a;"></div>
<div class="t" style="left:77.0px;top:584.9px;font-size:13.5px;color:#f0f0f0;transform:scaleX(0.9193);transform-origin:0 0;">Show Open Files</div>
<svg style="left:237px;top:590px" width="9" height="5" viewBox="0 0 9 5"><path d="M0 0h8L4 4.500z" fill="#fff"/></svg>
<div style="left:68px;top:606px;width:936px;height:109px;background:#3c3c3c;"></div>
<div style="left:68px;top:606px;width:933px;height:109px;background:#808080;border-top:1px solid #3a3a3a;"></div>
<div style="left:70px;top:606.5px;width:144.5px;height:108px;background:#b2b2b2;"></div>
<div style="left:82.8px;top:625.8px;width:117.5px;height:69.5px;background:linear-gradient(#a4a4a4 0%,#8e8e8f 27%,#747476 50%,#5a5a5e 70%,#48484c 100%);border:2px solid #fff;"></div>
<div style="left:112px;top:631px;width:59.5px;height:59.5px;border-radius:50%;background:#dedede;border:1px solid #ececec;"></div>
<div style="left:114.2px;top:633.2px;width:55.1px;height:55.1px;border-radius:50%;background:#9a9a9a;"></div>
<div style="left:117.5px;top:636.5px;width:48.5px;height:48.5px;border-radius:50%;background:#dddddd;"></div>
<svg style="left:184px;top:629px" width="13" height="13" viewBox="0 0 13 13"><rect x=".7" y=".7" width="11" height="9.800" fill="#4a4a4a" stroke="#1a1a1a" stroke-width="1.400"/><path d="M3.500 3c2.500-.5 5 1.500 5.500 4l3.500 3.500-1 1L8 8C5.500 8 3.500 5.500 3.500 3z" fill="#f4f4f4"/></svg>
<div style="left:986.5px;top:606.5px;width:14px;height:108px;background:#484848;border:1px solid #262626;"></div>
<div style="left:987.5px;top:677px;width:12px;height:1px;background:#262626;"></div>
<div style="left:987.5px;top:695.5px;width:12px;height:1px;background:#262626;"></div>
<svg style="left:990px;top:684px" width="8" height="5" viewBox="0 0 8 5"><path d="M0 5h8L4 0z" fill="#606060"/></svg>
<svg style="left:990px;top:703px" width="8" height="5" viewBox="0 0 8 5"><path d="M0 0h8L4 5z" fill="#606060"/></svg>
<!-- sec_dock -->
<div style="left:0px;top:739px;width:1280px;height:61px;background:#000;"></div>
<div style="left:258px;top:742px;width:764px;height:60px;background:#4e4b4e;border-radius:5px 5px 0 0;"></div>
<svg style="left:266px;top:751px" width="38.5" height="36.5" viewBox="0 0 38.5 36.5"><defs><clipPath id="fc"><rect x="0" y="0" width="38.500" height="36.500" rx="3"/></clipPath></defs><g clip-path="url(#fc)"><rect x="0" y="0" width="38.500" height="36.500" fill="#e6edf6"/><path d="M0 0h22c-3 8-4 14-4 19h4c0 7 .5 12 2 17.500H0z" fill="#1d9bf3"/><path d="M0 0h22c-3 8-4 14-4 19h4c0 7 .5 12 2 17.500H0z" fill="url(#fgd)"/></g><defs><linearGradient id="fgd" x1="0" y1="0" x2="0" y2="1"><stop offset="0" stop-color="#3cb4fa"/><stop offset="1" stop-color="#1478e0"/></linearGradient></defs><path d="M10.500 10v3.500M28 10v3.500" stroke="#1a1a1a" stroke-width="1.300" stroke-linecap="round"/><path d="M7.500 23c6 6 17 6 23.500 0" fill="none" stroke="#1a1a1a" stroke-width="1.300" stroke-linecap="round"/></svg>
<div style="left:283px;top:794px;width:4px;height:4px;background:#0a0a0a;border-radius:50%;"></div>
<svg style="left:314px;top:749px" width="41" height="41" viewBox="0 0 41 41"><defs><linearGradient id="lp" x1="0" y1="0" x2="0" y2="1"><stop offset="0" stop-color="#d4d8dc"/><stop offset="1" stop-color="#878b91"/></linearGradient></defs><circle cx="20.500" cy="20.500" r="20.200" fill="url(#lp)" stroke="#e6e8ea" stroke-width="1.100"/><path d="M31 9c-7 0-12 4-15 10l-4 1-3 4 5 0 3 3 0 5 4-3 1-4c6-3 10-8 9-16z" fill="#4a4c50"/><circle cx="25" cy="15.500" r="2.300" fill="#9a9ca0"/><path d="M13 26l-4 6 6-4z" fill="#4a4c50"/></svg>
<svg style="left:363px;top:749px" width="41" height="41" viewBox="0 0 41 41"><defs><linearGradient id="sf" x1="0" y1="0" x2="0" y2="1"><stop offset="0" stop-color="#2ab4f8"/><stop offset="1" stop-color="#1a62e0"/></linearGradient></defs><circle cx="20.500" cy="20.500" r="20.200" fill="#f0f0f0"/><circle cx="20.500" cy="20.500" r="18" fill="url(#sf)"/><circle cx="20.500" cy="20.500" r="16" fill="none" stroke="#fff" stroke-width="2.500" stroke-dasharray=".7 1.700" opacity=".8"/><path d="M32 9L18 18l5 5z" fill="#f03a3a"/><path d="M9 32l14-9-5-5z" fill="#f4f4f4"/></svg>
<div style="left:381px;top:794px;width:4px;height:4px;background:#0a0a0a;border-radius:50%;"></div>
<svg style="left:413.5px;top:747px" width="39" height="44" viewBox="0 0 39 44"><g transform="rotate(-9 18 24)"><rect x="2.500" y="4.500" width="30" height="37" fill="#fafafa" stroke="#c8c8c8" stroke-width=".5"/><rect x="2.500" y="4.500" width="30" height="6.500" fill="#f09a1e"/><text x="5.500" y="9.800" font-family="Liberation Sans,sans-serif" font-weight="700" font-size="4.500" fill="#fff">PAGES</text><rect x="6" y="14" width="14" height="10.500" fill="#2f88d0"/><path d="M9.500 16.500l3.500 6 3.500-6-3.500 2z" fill="#f0a01e"/><g stroke="#c4c4c4" stroke-width=".9"><path d="M22.500 15.500h7.500M22.500 18h7.500M22.500 20.500h7.500M22.500 23h7.500M6 27.500h24M6 30h24M6 32.500h24M6 35h24M6 37.500h16"/></g></g><path d="M34.500 2.500l3.500 1.500L28.500 30l-4-1.300z" fill="#f0a62a" stroke="#9a6410" stroke-width=".5"/><path d="M24.500 28.700l4 1.300-2.500 8-3.500-1.200z" fill="#3a3030"/><path d="M22.500 36.800l3.500 1.200-3.200 4.500z" fill="#d8d8d8"/></svg>
<svg style="left:460.5px;top:749px" width="41" height="41" viewBox="0 0 41 41"><circle cx="20.500" cy="20.500" r="20.200" fill="#f4f4f4" stroke="#d0d0d0" stroke-width=".6"/><ellipse cx="20.500" cy="10.500" rx="5.200" ry="8.500" fill="#f8921e" opacity=".85" transform="rotate(0 20.500 20.500)"/><ellipse cx="20.500" cy="10.500" rx="5.200" ry="8.500" fill="#f2cc20" opacity=".85" transform="rotate(45 20.500 20.500)"/><ellipse cx="20.500" cy="10.500" rx="5.200" ry="8.500" fill="#9ccc3c" opacity=".85" transform="rotate(90 20.500 20.500)"/><ellipse cx="20.500" cy="10.500" rx="5.200" ry="8.500" fill="#3cc0a0" opacity=".85" transform="rotate(135 20.500 20.500)"/><ellipse cx="20.500" cy="10.500" rx="5.200" ry="8.500" fill="#3c8ae8" opacity=".85" transform="rotate(180 20.500 20.500)"/><ellipse cx="20.500" cy="10.500" rx="5.200" ry="8.500" fill="#8a5ad0" opacity=".85" transform="rotate(225 20.500 20.500)"/><ellipse cx="20.500" cy="10.500" rx="5.200" ry="8.500" fill="#d850a0" opacity=".85" transform="rotate(270 20.500 20.500)"/><ellipse cx="20.500" cy="10.500" rx="5.200" ry="8.500" fill="#f0503c" opacity=".85" transform="rotate(315 20.500 20.500)"/></svg>
<svg style="left:509.5px;top:749px" width="41" height="41" viewBox="0 0 41 41"><defs><linearGradient id="it" x1="0" y1="0" x2="1" y2="1"><stop offset="0" stop-color="#f85a8a"/><stop offset=".5" stop-color="#c850e0"/><stop offset="1" stop-color="#3cc0f8"/></linearGradient><linearGradient id="itn" x1="0" y1="0" x2="0" y2="1"><stop offset="0" stop-color="#f8506e"/><stop offset=".55" stop-color="#c85adc"/><stop offset="1" stop-color="#4ab4f8"/></linearGradient></defs><circle cx="20.500" cy="20.500" r="20.200" fill="url(#it)"/><circle cx="20.500" cy="20.500" r="17.800" fill="#fbfbfb"/><g transform="translate(20.500,20.500) scale(1.160) translate(-21.200,-20)"><path d="M16 11.500l13-3v17.500a3.800 3.300 0 1 1-2.500-3.100V13.500l-8 1.900V28.500a3.800 3.300 0 1 1-2.500-3.100z" fill="url(#itn)"/></g></svg>
<div style="left:528px;top:794px;width:4px;height:4px;background:#0a0a0a;border-radius:50%;"></div>
<svg style="left:559.5px;top:750.5px" width="40" height="37" viewBox="0 0 40 37"><defs><linearGradient id="sp" x1="0" y1="0" x2="0" y2="1"><stop offset="0" stop-color="#d6dadc"/><stop offset="1" stop-color="#85888c"/></linearGradient></defs><rect x="0" y="0" width="40" height="37" rx="2" fill="url(#sp)"/><circle cx="20" cy="19" r="16.500" fill="#2c2c2e"/><rect x="19.300" y="3.800" width="1.500" height="3" fill="#d4d6da" transform="rotate(0.00 20 19)"/><rect x="19.300" y="3.800" width="1.500" height="3" fill="#d4d6da" transform="rotate(12.86 20 19)"/><rect x="19.300" y="3.800" width="1.500" height="3" fill="#d4d6da" transform="rotate(25.71 20 19)"/><rect x="19.300" y="3.800" width="1.500" height="3" fill="#d4d6da" transform="rotate(38.57 20 19)"/><rect x="19.300" y="3.800" width="1.500" height="3" fill="#d4d6da" transform="rotate(51.43 20 19)"/><rect x="19.300" y="3.800" width="1.500" height="3" fill="#d4d6da" transform="rotate(64.29 20 19)"/><rect x="19.300" y="3.800" width="1.500" height="3" fill="#d4d6da" transform="rotate(77.14 20 19)"/><rect x="19.300" y="3.800" width="1.500" height="3" fill="#d4d6da" transform="rotate(90.00 20 19)"/><rect x="19.300" y="3.800" width="1.500" height="3" fill="#d4d6da" transform="rotate(102.86 20 19)"/><rect x="19.300" y="3.800" width="1.500" height="3" fill="#d4d6da" transform="rotate(115.71 20 19)"/><rect x="19.300" y="3.800" width="1.500" height="3" fill="#d4d6da" transform="rotate(128.57 20 19)"/><rect x="19.300" y="3.800" width="1.500" height="3" fill="#d4d6da" transform="rotate(141.43 20 19)"/><rect x="19.300" y="3.800" width="1.500" height="3" fill="#d4d6da" transform="rotate(154.29 20 19)"/><rect x="19.300" y="3.800" width="1.500" height="3" fill="#d4d6da" transform="rotate(167.14 20 19)"/><rect x="19.300" y="3.800" width="1.500" height="3" fill="#d4d6da" transform="rotate(180.00 20 19)"/><rect x="19.300" y="3.800" width="1.500" height="3" fill="#d4d6da" transform="rotate(192.86 20 19)"/><rect x="19.300" y="3.800" width="1.500" height="3" fill="#d4d6da" transform="rotate(205.71 20 19)"/><rect x="19.300" y="3.800" width="1.500" height="3" fill="#d4d6da" transform="rotate(218.57 20 19)"/><rect x="19.300" y="3.800" width="1.500" height="3" fill="#d4d6da" transform="rotate(231.43 20 19)"/><rect x="19.300" y="3.800" width="1.500" height="3" fill="#d4d6da" transform="rotate(244.29 20 19)"/><rect x="19.300" y="3.800" width="1.500" height="3" fill="#d4d6da" transform="rotate(257.14 20 19)"/><rect x="19.300" y="3.800" width="1.500" height="3" fill="#d4d6da" transform="rotate(270.00 20 19)"/><rect x="19.300" y="3.800" width="1.500" height="3" fill="#d4d6da" transform="rotate(282.86 20 19)"/><rect x="19.300" y="3.800" width="1.500" height="3" fill="#d4d6da" transform="rotate(295.71 20 19)"/><rect x="19.300" y="3.800" width="1.500" height="3" fill="#d4d6da" transform="rotate(308.57 20 19)"/><rect x="19.300" y="3.800" width="1.500" height="3" fill="#d4d6da" transform="rotate(321.43 20 19)"/><rect x="19.300" y="3.800" width="1.500" height="3" fill="#d4d6da" transform="rotate(334.29 20 19)"/><rect x="19.300" y="3.800" width="1.500" height="3" fill="#d4d6da" transform="rotate(347.14 20 19)"/><circle cx="20" cy="19" r="11.500" fill="#b8babe"/><circle cx="20" cy="19" r="10.300" fill="#58585c"/><g stroke="#c8cace" stroke-width="2.600" stroke-linecap="round"><path d="M20 19L13 9.500M20 19l11.300 1M20 19l-5.500 10"/></g><circle cx="20" cy="19" r="2.600" fill="#d8dade"/></svg>
<svg style="left:606.5px;top:748px" width="43" height="43" viewBox="0 0 43 43"><circle cx="21.500" cy="21.500" r="21.300" fill="#f4c20d"/><path d="M21.500 21.500L3.050 10.850A21.300 21.300 0 0 1 39.950 10.850z" fill="#db4437"/><path d="M21.500 .2A21.300 21.300 0 0 1 39.950 10.850H21.500z" fill="#db4437"/><path d="M21.500 21.500L3.050 10.850A21.300 21.300 0 0 0 21.500 42.800L30.700 26.800z" fill="#0f9d58"/><path d="M21.500 21.500h18.450" stroke="#f4c20d" stroke-width="0"/><circle cx="21.500" cy="21.500" r="9.800" fill="#f8f8f8"/><circle cx="21.500" cy="21.500" r="7.800" fill="#4285f4"/></svg>
<div style="left:626px;top:794px;width:4px;height:4px;background:#0a0a0a;border-radius:50%;"></div>
<svg style="left:657px;top:749px" width="41" height="41" viewBox="0 0 41 41"><circle cx="20.500" cy="20.500" r="20" fill="#f4f4f8"/><circle cx="20.500" cy="20.500" r="18.300" fill="#6f86d6"/><path d="M11 16c2-2 5-3 7-3l.6 1.200h3.800L23 13c2 0 5 1 7 3 2 4 2.600 7 2.500 10-2 1.700-4 2.400-6 2.600l-1.200-2c-3 .8-6.600.8-9.600 0l-1.200 2c-2-.2-4-.9-6-2.600C8.400 23 9 20 11 16z" fill="#fff"/><ellipse cx="16.700" cy="21.500" rx="2.200" ry="2.500" fill="#6f86d6"/><ellipse cx="24.300" cy="21.500" rx="2.200" ry="2.500" fill="#6f86d6"/></svg>
<div style="left:684px;top:746px;width:18px;height:18px;background:#f23a4a;border-radius:50%;"></div>
<div style="left:692px;top:754px;width:2.5px;height:2.5px;background:#fff;border-radius:50%;"></div>
<div style="left:675.5px;top:794px;width:4px;height:4px;background:#0a0a0a;border-radius:50%;"></div>
<div style="left:706.5px;top:750px;width:39.5px;height:38.5px;background:linear-gradient(#727272,#6a6a6a);border:1px solid #7c7c7c;"></div>
<div class="t" style="left:712.5px;top:760.4px;font-size:19px;color:#fff;font-weight:700;transform:scaleX(0.7562);transform-origin:0 0;">Live</div>
<div style="left:724px;top:794px;width:4px;height:4px;background:#0a0a0a;border-radius:50%;"></div>
<svg style="left:761px;top:747px" width="31" height="44" viewBox="0 0 31 44"><defs><radialGradient id="fl" cx=".35" cy=".3" r=".85"><stop offset="0" stop-color="#ffd060"/><stop offset=".35" stop-color="#f89428"/><stop offset=".75" stop-color="#e8601a"/><stop offset="1" stop-color="#a83a0c"/></radialGradient></defs><path d="M4 17c3-6 13-8 20-3 3 3 2 9-1 15-3 6-8 12-12 14-3 1-5-2-6-6-2-7-3-15-1-20z" fill="url(#fl)"/><path d="M2.500 13c1-5 6-8 11-6 2-1 4-1 6 1 4 0 8 3 9 8-3 2-7 1-9-1-2 3-6 4-9 2-3 1-6 0-8-4z" fill="#3e8a22"/><path d="M3.500 12c2-4 6-5 10-3-3 1-6 3-8 6z" fill="#a8d84a"/><path d="M15.500 9c2-4 5-7 9-8.500" fill="none" stroke="#7aa83a" stroke-width="1.400" stroke-linecap="round"/></svg>
<div style="left:803.5px;top:748px;width:41.5px;height:40px;background:linear-gradient(135deg,#0c4cae,#0a3f9a 55%,#0a368a);"></div>
<svg style="left:813px;top:756px" width="23" height="25" viewBox="0 0 23 25"><path d="M2 19V.8h17.500" fill="none" stroke="#cfe4fa" stroke-width="1.400"/><rect x="5.300" y="4.500" width="16.500" height="19.500" fill="#0a3f9a" stroke="#d8ecff" stroke-width="1.600"/><path d="M6.500 13.500l5-6 3.500 3.500 2.500-3 3.500 4" fill="none" stroke="#d8ecff" stroke-width="1.300"/><circle cx="13.500" cy="14.500" r="2" fill="#bfe0fa"/><path d="M10 20c0-4 7-4 7 0z" fill="#bfe0fa"/><rect x="6" y="19.500" width="15" height="4" fill="#bfe0fa"/></svg>
<div style="left:822px;top:794px;width:4px;height:4px;background:#0a0a0a;border-radius:50%;"></div>
<div style="left:861px;top:750px;width:1px;height:41px;background:#2a282c;"></div>
<svg style="left:874.5px;top:752px" width="44.5" height="33.5" viewBox="0 0 44.5 33.5"><path d="M0 4c0-1.500 1-2.500 2.500-2.500h11l3 3.500h25.500c1.500 0 2.500 1 2.500 2.500V31c0 1.500-1 2.500-2.500 2.500h-39.500C1 33.500 0 32.500 0 31z" fill="#5ab4ec"/><path d="M0 8.500h44.500V31c0 1.500-1 2.500-2.500 2.500h-39.500C1 33.500 0 32.500 0 31z" fill="#74c4f4"/><g stroke="#58a8dc" stroke-width="2.200" fill="none" stroke-linecap="round"><path d="M22 12l-8 15M22 12l8 15M12 22h20"/></g></svg>
<svg style="left:924px;top:752px" width="44.5" height="33.5" viewBox="0 0 44.5 33.5"><path d="M0 4c0-1.500 1-2.500 2.500-2.500h11l3 3.500h25.500c1.500 0 2.500 1 2.500 2.500V31c0 1.500-1 2.500-2.500 2.500h-39.500C1 33.500 0 32.500 0 31z" fill="#5ab4ec"/><path d="M0 8.500h44.500V31c0 1.500-1 2.500-2.500 2.500h-39.500C1 33.500 0 32.500 0 31z" fill="#74c4f4"/><circle cx="22" cy="20.500" r="8" fill="#58a8dc"/><path d="M22 15v9M18 20.500l4 4 4-4" stroke="#74c4f4" stroke-width="2.400" fill="none"/></svg>
<svg style="left:977px;top:746px" width="35" height="44" viewBox="0 0 35 44"><defs><linearGradient id="tr" x1="0" y1="0" x2="1" y2="0"><stop offset="0" stop-color="#c8cacc"/><stop offset=".4" stop-color="#f4f4f6"/><stop offset="1" stop-color="#babcc0"/></linearGradient></defs><path d="M2 9h31l-3.500 32c-.3 2-2 3-4 3h-16c-2 0-3.700-1-4-3z" fill="url(#tr)"/><ellipse cx="17.500" cy="9" rx="15.500" ry="4" fill="#e8e8ea" stroke="#a8aaae" stroke-width=".8"/><path d="M5 8c2-5 6-7 10-6 4-2 10-1 14 5-3 3-20 4-24 1z" fill="#7a7880"/><g><path d="M8 7l4-4 3 3z" fill="#d8d8dc"/><path d="M15 6l4-4.500 4 4z" fill="#ececee"/><path d="M21 7l4-3 2 3.500z" fill="#b8b8c0"/><circle cx="11" cy="7" r="1.300" fill="#a84a3a"/><circle cx="24" cy="6.500" r="1.300" fill="#4a7ab0"/><circle cx="18" cy="8" r="1.200" fill="#5a5860"/></g></svg>
<!-- sec_menu -->
<div style="left:1003px;top:60px;width:1.5px;height:655px;background:#0c0c0c;"></div>
<div style="left:514px;top:22px;width:242px;height:396px;background:linear-gradient(180deg,#c3c3c3 0px,#c5c5c5 30px,#cbcbcc 46px,#cfcfd1 68px,#d4d4d7 86px,#d8d8dc 130px,#dcdce2 200px,#dfdde4 300px,#e0d9e1 396px);border-radius:0 0 6px 6px;box-shadow:0 6px 16px rgba(0,0,0,.32),0 0 0 .5px rgba(0,0,0,.2);"></div>
<div style="left:514px;top:22px;width:242px;height:396px;background:radial-gradient(ellipse 150px 120px at 50% 97%,rgba(242,224,236,.85),rgba(242,224,236,0) 100%),radial-gradient(ellipse 150px 130px at 45% 60%,rgba(234,234,244,.75),rgba(234,234,244,0) 100%),radial-gradient(ellipse 90px 210px at 104% 100%,rgba(110,104,116,.42),rgba(110,104,116,0) 100%),linear-gradient(90deg,rgba(120,120,126,0) 70%,rgba(120,120,126,.13) 100%);border-radius:0 0 6px 6px;"></div>
<div class="t" style="left:555.0px;top:28.1px;font-size:14px;color:#1c1c1c;letter-spacing:0.15px;">New</div>
<svg style="left:735px;top:30px" width="9" height="10" viewBox="0 0 9 10"><path d="M0 0v10l8.500-5z" fill="#1c1c1c"/></svg>
<div class="t" style="left:555.0px;top:47.1px;font-size:14px;color:#1c1c1c;letter-spacing:0.14px;">Duplicate Layer...</div>
<div class="t" style="left:555.0px;top:66.1px;font-size:14px;color:#1c1c1c;letter-spacing:0.11px;">Delete Layer</div>
<div class="t" style="left:555.0px;top:97.1px;font-size:14px;color:#1c1c1c;letter-spacing:-0.07px;">Rename Layer...</div>
<div class="t" style="left:555.0px;top:116.1px;font-size:14px;color:#1c1c1c;letter-spacing:0.10px;">Layer Style</div>
<svg style="left:735px;top:118px" width="9" height="10" viewBox="0 0 9 10"><path d="M0 0v10l8.500-5z" fill="#1c1c1c"/></svg>
<div class="t" style="left:555.0px;top:147.1px;font-size:14px;color:#1c1c1c;letter-spacing:0.03px;">New Fill Layer</div>
<svg style="left:735px;top:149px" width="9" height="10" viewBox="0 0 9 10"><path d="M0 0v10l8.500-5z" fill="#1c1c1c"/></svg>
<div class="t" style="left:555.0px;top:166.1px;font-size:14px;color:#1c1c1c;letter-spacing:0.26px;">New Adjustment Layer</div>
<svg style="left:735px;top:168px" width="9" height="10" viewBox="0 0 9 10"><path d="M0 0v10l8.500-5z" fill="#1c1c1c"/></svg>
<div class="t" style="left:555.0px;top:185.1px;font-size:14px;color:#1c1c1c;letter-spacing:0.22px;">Layer Content Options...</div>
<div class="t" style="left:555.0px;top:216.1px;font-size:14px;color:#a8a8ac;letter-spacing:0.22px;">Type</div>
<svg style="left:735px;top:218px" width="9" height="10" viewBox="0 0 9 10"><path d="M0 0v10l8.500-5z" fill="#a8a8ac"/></svg>
<div class="t" style="left:555.0px;top:247.1px;font-size:14px;color:#1c1c1c;letter-spacing:0.16px;">Simplify Layer</div>
<div class="t" style="left:555.0px;top:278.1px;font-size:14px;color:#1c1c1c;letter-spacing:0.04px;">Layer Mask</div>
<svg style="left:735px;top:280px" width="9" height="10" viewBox="0 0 9 10"><path d="M0 0v10l8.500-5z" fill="#1c1c1c"/></svg>
<div class="t" style="left:555.0px;top:297.1px;font-size:14px;color:#1c1c1c;letter-spacing:0.19px;">Create Clipping Mask</div>
<div class="t" style="left:555.0px;top:328.1px;font-size:14px;color:#1c1c1c;letter-spacing:0.23px;">Arrange</div>
<svg style="left:735px;top:330px" width="9" height="10" viewBox="0 0 9 10"><path d="M0 0v10l8.500-5z" fill="#1c1c1c"/></svg>
<div class="t" style="left:555.0px;top:359.1px;font-size:14px;color:#a8a8ac;letter-spacing:0.16px;">Merge Down</div>
<div class="t" style="left:555.0px;top:378.1px;font-size:14px;color:#1c1c1c;letter-spacing:0.21px;">Merge Visible</div>
<div class="t" style="left:555.0px;top:397.1px;font-size:14px;color:#1c1c1c;letter-spacing:0.13px;">Flatten Image</div>
<div style="left:514px;top:88.5px;width:242px;height:1.5px;background:rgba(140,140,148,.32);"></div>
<div style="left:514px;top:139.5px;width:242px;height:1.5px;background:rgba(140,140,148,.32);"></div>
<div style="left:514px;top:208.5px;width:242px;height:1.5px;background:rgba(140,140,148,.32);"></div>
<div style="left:514px;top:238.5px;width:242px;height:1.5px;background:rgba(140,140,148,.32);"></div>
<div style="left:514px;top:269.5px;width:242px;height:1.5px;background:rgba(140,140,148,.32);"></div>
<div style="left:514px;top:319.5px;width:242px;height:1.5px;background:rgba(140,140,148,.32);"></div>
<div style="left:514px;top:350.5px;width:242px;height:1.5px;background:rgba(140,140,148,.32);"></div>
<svg style="left:538.5px;top:67.5px" width="13" height="14" viewBox="0 0 13 14"><path d="M4 .5h5v1.500h3.500v2H.5V2H4z" fill="#5a5a5a"/><path d="M1.500 4.500h10l-.8 9H2.300z" fill="#6e6e6e"/><path d="M4.200 6v6M6.500 6v6M8.800 6v6" stroke="#aaa" stroke-width=".9"/></svg>
<div class="t" style="left:716.0px;top:297.1px;font-size:14px;color:#1c1c1c;">⌘</div>
<div class="t" style="left:731.5px;top:297.1px;font-size:14px;color:#1c1c1c;">G</div>
<div class="t" style="left:716.0px;top:359.1px;font-size:14px;color:#a8a8ac;">⌘</div>
<div class="t" style="left:731.5px;top:359.1px;font-size:14px;color:#a8a8ac;">E</div>
<div class="t" style="left:703.0px;top:377.8px;font-size:15px;color:#1c1c1c;transform:scaleX(1.350);transform-origin:0 0;">⇧</div>
<div class="t" style="left:716.0px;top:378.1px;font-size:14px;color:#1c1c1c;">⌘</div>
<div class="t" style="left:731.5px;top:378.1px;font-size:14px;color:#1c1c1c;">E</div>
</div>
</body>
</html>
